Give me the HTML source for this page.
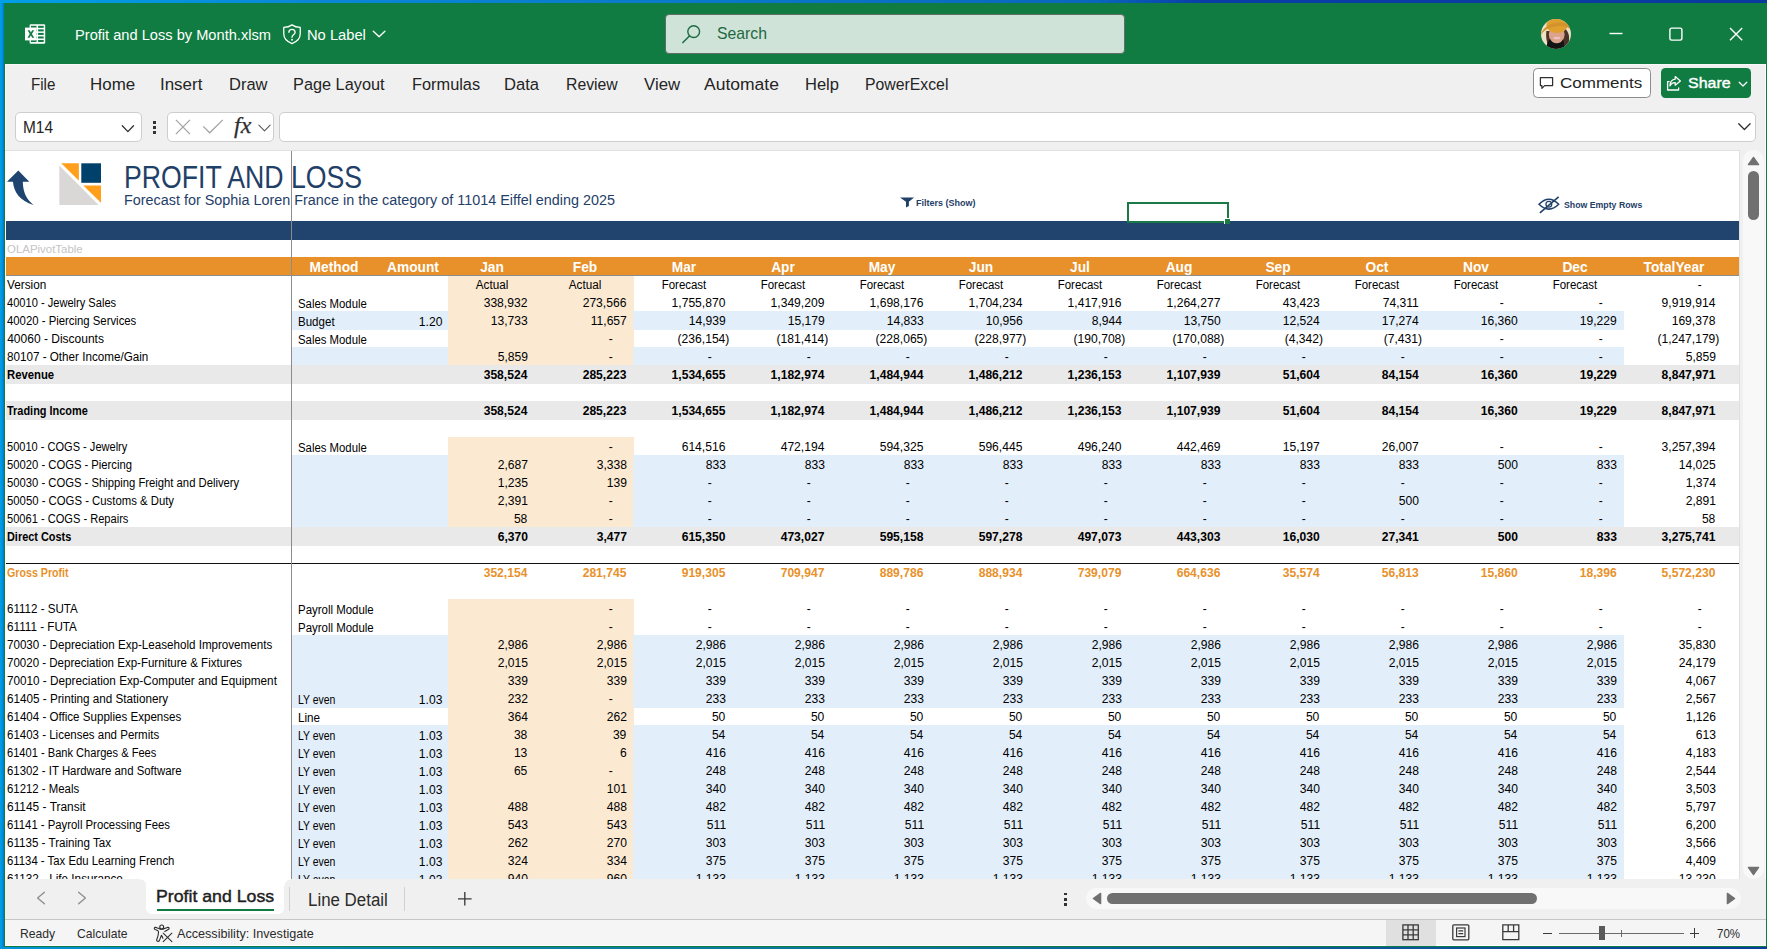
<!DOCTYPE html>
<html lang="en"><head><meta charset="utf-8"><title>Profit and Loss by Month.xlsm - Excel</title>
<style>
html,body{margin:0;padding:0}
body{width:1767px;height:949px;position:relative;overflow:hidden;background:#0a3ea6;font-family:"Liberation Sans",Arial,sans-serif}
.a{position:absolute}
.t{position:absolute;white-space:nowrap;line-height:20px;transform-origin:0 50%}
svg{display:block;overflow:visible}
</style></head><body>
<div class="a" style="left:0;top:0;width:1767px;height:949px;background:linear-gradient(90deg,#009fe6 0%,#0a88d6 17%,#0a78c8 40%,#0a66bc 62%,#0a3ea6 68%,#0a3a9e 100%)"></div>
<div class="a" style="left:0;top:3px;width:4px;height:946px;background:linear-gradient(90deg,#00a0e8 0%,#0096e0 45%,#0079c2 100%)"></div>
<div class="a" style="left:0;top:946.5px;width:1767px;height:2.5px;background:linear-gradient(90deg,#0094dc 0%,#0a86b4 15%,#0b7c9c 40%,#0b5f9a 70%,#0a3d9a 100%)"></div>
<div class="a" style="left:3.8px;top:3px;width:1763.2px;height:943.9px;background:#107C41;"></div>
<div class="a" style="left:5.1px;top:63.7px;width:1760.6px;height:882.1px;background:#F0F0F0;"></div>
<div class="a" style="left:5.1px;top:63.7px;width:1760.6px;height:0.8px;background:#f8f8f8;"></div>
<div class="a" style="left:5.1px;top:63.7px;width:1.1px;height:882.1px;background:#fbfbfb;"></div>
<div class="a" style="left:1764.8px;top:63.7px;width:0.9px;height:882.1px;background:#fbfbfb;"></div>
<svg class="a" style="left:24.9px;top:24px;" width="20.3" height="20" viewBox="0 0 20.3 20"><rect x="4.6" y="0.2" width="15.6" height="19.6" rx="1.2" fill="#fff"/><rect x="5.9" y="1.80" width="5.6" height="2.05" fill="#107C41"/><rect x="13.1" y="1.80" width="5.6" height="2.05" fill="#107C41"/><rect x="5.9" y="5.35" width="5.6" height="2.05" fill="#107C41"/><rect x="13.1" y="5.35" width="5.6" height="2.05" fill="#107C41"/><rect x="5.9" y="8.90" width="5.6" height="2.05" fill="#107C41"/><rect x="13.1" y="8.90" width="5.6" height="2.05" fill="#107C41"/><rect x="5.9" y="12.45" width="5.6" height="2.05" fill="#107C41"/><rect x="13.1" y="12.45" width="5.6" height="2.05" fill="#107C41"/><rect x="5.9" y="16.00" width="5.6" height="2.05" fill="#107C41"/><rect x="13.1" y="16.00" width="5.6" height="2.05" fill="#107C41"/><rect x="0" y="3.6" width="11.4" height="12.8" fill="#fff"/><path d="M2.6 6.2 L4.7 6.2 L5.9 8.6 L7.1 6.2 L9.1 6.2 L6.95 10 L9.2 13.8 L7.1 13.8 L5.85 11.3 L4.6 13.8 L2.5 13.8 L4.75 10 Z" fill="#107C41"/></svg>
<div class="t" style="top:25.00px;font-size:15.3px;color:#fff;left:75.20px;transform:scaleX(0.9564);">Profit and Loss by Month.xlsm</div>
<svg class="a" style="left:283px;top:23.9px;" width="18" height="20.4" viewBox="0 0 18 20.4"><path d="M9 0.9 C6.6 2.6 3.9 3.3 0.75 3.4 L0.75 9.6 C0.75 14.3 3.9 17.8 9 19.6 C14.1 17.8 17.25 14.3 17.25 9.6 L17.25 3.4 C14.1 3.3 11.4 2.6 9 0.9 Z" fill="none" stroke="#fff" stroke-width="1.3" stroke-linejoin="round"/><path d="M5.9 8.3 C5.9 4.5 12.1 4.5 12.1 8.2 C12.1 10.7 9 10.9 9 13.3" fill="none" stroke="#fff" stroke-width="1.35" stroke-linecap="round"/><circle cx="9" cy="15.8" r="0.95" fill="#fff"/></svg>
<div class="t" style="top:25.00px;font-size:15.3px;color:#fff;left:307.40px;transform:scaleX(0.9617);">No Label</div>
<svg class="a" style="left:372px;top:30px;" width="14" height="9" viewBox="0 0 14 9"><path d="M1.3 1.3 L7.1 6.7 L12.9 1.3" fill="none" stroke="#fff" stroke-width="1.4" stroke-linecap="round" stroke-linejoin="round"/></svg>
<div class="a" style="left:665px;top:14px;width:460px;height:40px;background:#CFE3D8;border-radius:4px;box-sizing:border-box;border:1px solid #5f6e66;"></div>
<svg class="a" style="left:681px;top:23px;" width="22" height="22" viewBox="0 0 22 22"><circle cx="12.7" cy="8.6" r="5.9" fill="none" stroke="#1d6b43" stroke-width="1.4"/><path d="M8.4 12.9 L1.9 19.6" stroke="#1d6b43" stroke-width="1.5" stroke-linecap="round"/></svg>
<div class="t" style="top:23.00px;font-size:16.4px;color:#1d6840;left:717.00px;transform:scaleX(0.9622);">Search</div>
<svg class="a" style="left:1541px;top:19px;" width="30" height="30" viewBox="0 0 30 30"><defs><clipPath id="avc"><circle cx="15" cy="15" r="15"/></clipPath></defs><g clip-path="url(#avc)"><rect x="-1" y="-1" width="32" height="32" fill="#EEE1C6"/><path d="M5.4 12 C4.6 17 5.6 22 7 27 L11 27 L10 12 Z" fill="#4a3228"/><path d="M21.5 9 C27 10 28.6 16 28 22 C27.4 25.5 25 28 22 29 L20 20 Z" fill="#4a3228"/><ellipse cx="15.7" cy="15.6" rx="7.9" ry="8.9" fill="#DCA38C"/><ellipse cx="15.9" cy="19" rx="3.5" ry="1.3" fill="#EBC0BD"/><ellipse cx="10.7" cy="11.2" rx="1.5" ry="0.8" fill="#4b3a33"/><ellipse cx="19.5" cy="10.6" rx="1.5" ry="0.8" fill="#4b3a33"/><path d="M4.5 31 L5.8 26 C6.8 22.5 8 20.6 9.2 20.2 C10.5 23 13 24.3 15.7 24.3 C18.5 24.3 21 23 22 20.6 C23 22 23.2 27 23.5 31 Z" fill="#141414"/><ellipse cx="16" cy="6.6" rx="10.6" ry="7.4" fill="#E0A030"/><path d="M-1 16.8 C2 12.2 6 9.8 9 9 C13 6.8 20 6.6 24 7.5 C26.5 8.2 28.4 9.4 30.5 11.6 L29.5 6.5 C24 2.2 12 2.8 6 7.2 C3 9.4 0.5 12.5 -1 16.8 Z" fill="#D3922A"/></g></svg>
<svg class="a" style="left:1608px;top:26px;" width="16" height="16" viewBox="0 0 16 16"><path d="M1.5 7.5 H14.5" stroke="#fff" stroke-width="1.4"/></svg>
<svg class="a" style="left:1668px;top:26px;" width="16" height="16" viewBox="0 0 16 16"><rect x="1.9" y="2.1" width="12" height="12" rx="1.8" fill="none" stroke="#fff" stroke-width="1.4"/></svg>
<svg class="a" style="left:1728px;top:26px;" width="16" height="16" viewBox="0 0 16 16"><path d="M2 2 L14.2 14.2 M14.2 2 L2 14.2" stroke="#fff" stroke-width="1.4"/></svg>
<div class="t" style="top:75.00px;font-size:16.8px;color:#242424;left:31.10px;transform:scaleX(0.9013);">File</div>
<div class="t" style="top:75.00px;font-size:16.8px;color:#242424;left:90.30px;transform:scaleX(1.0086);">Home</div>
<div class="t" style="top:75.00px;font-size:16.8px;color:#242424;left:160.20px;transform:scaleX(1.0091);">Insert</div>
<div class="t" style="top:75.00px;font-size:16.8px;color:#242424;left:228.60px;transform:scaleX(0.9820);">Draw</div>
<div class="t" style="top:75.00px;font-size:16.8px;color:#242424;left:292.60px;transform:scaleX(0.9719);">Page Layout</div>
<div class="t" style="top:75.00px;font-size:16.8px;color:#242424;left:411.70px;transform:scaleX(0.9741);">Formulas</div>
<div class="t" style="top:75.00px;font-size:16.8px;color:#242424;left:504.30px;transform:scaleX(0.9891);">Data</div>
<div class="t" style="top:75.00px;font-size:16.8px;color:#242424;left:566.30px;transform:scaleX(0.9404);">Review</div>
<div class="t" style="top:75.00px;font-size:16.8px;color:#242424;left:644.10px;">View</div>
<div class="t" style="top:75.00px;font-size:16.8px;color:#242424;left:704.40px;transform:scaleX(1.0430);">Automate</div>
<div class="t" style="top:75.00px;font-size:16.8px;color:#242424;left:805.40px;transform:scaleX(0.9840);">Help</div>
<div class="t" style="top:75.00px;font-size:16.8px;color:#242424;left:865.40px;transform:scaleX(0.9413);">PowerExcel</div>
<div class="a" style="left:1533.2px;top:68.3px;width:117.4px;height:29.3px;background:#fff;border-radius:4.5px;box-sizing:border-box;border:1px solid #8d8d8d;"></div>
<svg class="a" style="left:1539px;top:75.5px;" width="16" height="15" viewBox="0 0 16 15"><path d="M1.4 1.5 H13.6 V9.6 H5.6 L2.9 12.4 V9.6 H1.4 Z" fill="none" stroke="#303030" stroke-width="1.25" stroke-linejoin="round"/></svg>
<div class="t" style="top:73.00px;font-size:15.4px;color:#242424;left:1559.70px;transform:scaleX(1.1054);">Comments</div>
<div class="a" style="left:1661px;top:68.3px;width:89.8px;height:29.3px;background:#107C41;border-radius:4.5px;"></div>
<svg class="a" style="left:1666px;top:74.5px;" width="16" height="17" viewBox="0 0 16 17"><path d="M3.6 6.6 H1.6 V15 H12.6 V12.4" fill="none" stroke="#fff" stroke-width="1.3" stroke-linejoin="round"/><path d="M9.2 1.6 L14.4 5.9 L9.2 10.2 V7.6 C6.6 7.5 5 8.6 3.9 10.9 C4.1 7 6 4.6 9.2 4.2 Z" fill="none" stroke="#fff" stroke-width="1.25" stroke-linejoin="round"/></svg>
<div class="t" style="top:73.00px;font-size:15.4px;color:#fff;left:1687.60px;transform:scaleX(1.0366);-webkit-text-stroke:0.4px #fff;">Share</div>
<svg class="a" style="left:1737.5px;top:80.5px;" width="10" height="7" viewBox="0 0 10 7"><path d="M1.2 1.3 L5 5 L8.8 1.3" fill="none" stroke="#fff" stroke-width="1.3" stroke-linecap="round" stroke-linejoin="round"/></svg>
<div class="a" style="left:15.2px;top:112.2px;width:126.4px;height:29.7px;background:#fff;border-radius:5px;box-sizing:border-box;border:1px solid #cdcdcd;"></div>
<div class="t" style="top:118.00px;font-size:15.6px;color:#242424;left:22.60px;transform:scaleX(0.9885);">M14</div>
<svg class="a" style="left:121px;top:124px;" width="14" height="10" viewBox="0 0 14 10"><path d="M1.3 1.8 L6.9 7.6 L12.5 1.8" fill="none" stroke="#303030" stroke-width="1.3" stroke-linecap="round" stroke-linejoin="round"/></svg>
<div class="a" style="left:152.9px;top:121.1px;width:3.2px;height:2.9px;background:#333;"></div>
<div class="a" style="left:152.9px;top:126.1px;width:3.2px;height:2.9px;background:#333;"></div>
<div class="a" style="left:152.9px;top:131.1px;width:3.2px;height:2.9px;background:#333;"></div>
<div class="a" style="left:167px;top:112.2px;width:106.5px;height:29.7px;background:#fff;border-radius:5px;box-sizing:border-box;border:1px solid #cdcdcd;"></div>
<svg class="a" style="left:175px;top:119px;" width="16" height="16" viewBox="0 0 16 16"><path d="M0.9 0.9 L15 15.1 M15 0.9 L0.9 15.1" stroke="#a3a3a3" stroke-width="1.3"/></svg>
<svg class="a" style="left:202px;top:119px;" width="22" height="16" viewBox="0 0 22 16"><path d="M1.3 7.4 L7.7 13.8 L20.8 0.9" fill="none" stroke="#a3a3a3" stroke-width="1.3"/></svg>
<div class="t" style="left:233.6px;top:112.6px;line-height:26px;font-family:'Liberation Serif',serif;font-style:italic;font-size:23px;color:#2e2e2e;letter-spacing:0.2px;-webkit-text-stroke:0.25px #2e2e2e;transform:scaleX(1.04)">fx</div>
<svg class="a" style="left:258.3px;top:124.3px;" width="13" height="8" viewBox="0 0 13 8"><path d="M0.9 1.1 L6.5 6.8 L12.1 1.1" fill="none" stroke="#5a5a5a" stroke-width="1.1" stroke-linecap="round" stroke-linejoin="round"/></svg>
<div class="a" style="left:279.2px;top:112.2px;width:1476.4px;height:29.7px;background:#fff;border-radius:5px;box-sizing:border-box;border:1px solid #cdcdcd;"></div>
<svg class="a" style="left:1737px;top:121.5px;" width="15" height="10" viewBox="0 0 15 10"><path d="M1.7 1.8 L7.4 7.5 L13.1 1.8" fill="none" stroke="#303030" stroke-width="1.3" stroke-linecap="round" stroke-linejoin="round"/></svg>
<div class="a" style="left:5.1px;top:150px;width:1735.1px;height:729.3px;background:#e0e0e0;"></div>
<div class="a" style="left:5.1px;top:150.9px;width:1734.2px;height:728.4px;background:#fff;"></div>
<div class="a" id="sheet" style="left:0;top:0;width:1767px;height:879.3px;overflow:hidden">
<div class="a" style="left:6px;top:221px;width:1733.3px;height:18.9px;background:#20446E;"></div>
<div class="a" style="left:6px;top:257.2px;width:1733.3px;height:17.8px;background:#E8912A;"></div>
<div class="a" style="left:448px;top:275px;width:185.8px;height:18px;background:#FBE9D2;"></div>
<div class="a" style="left:448px;top:293px;width:185.8px;height:18px;background:#FBE9D2;"></div>
<div class="a" style="left:448px;top:311px;width:185.8px;height:18px;background:#FBE9D2;"></div>
<div class="a" style="left:292px;top:311px;width:156px;height:18.8px;background:#E2EEF9;"></div>
<div class="a" style="left:632.9px;top:311px;width:991.1px;height:18.8px;background:#E2EEF9;"></div>
<div class="a" style="left:448px;top:329px;width:185.8px;height:18px;background:#FBE9D2;"></div>
<div class="a" style="left:448px;top:347px;width:185.8px;height:18px;background:#FBE9D2;"></div>
<div class="a" style="left:292px;top:347px;width:156px;height:18.8px;background:#E2EEF9;"></div>
<div class="a" style="left:632.9px;top:347px;width:991.1px;height:18.8px;background:#E2EEF9;"></div>
<div class="a" style="left:6px;top:365px;width:1733.3px;height:18.8px;background:#E9E9E9;"></div>
<div class="a" style="left:6px;top:401px;width:1733.3px;height:18.8px;background:#E9E9E9;"></div>
<div class="a" style="left:448px;top:437px;width:185.8px;height:18px;background:#FBE9D2;"></div>
<div class="a" style="left:448px;top:455px;width:185.8px;height:18px;background:#FBE9D2;"></div>
<div class="a" style="left:292px;top:455px;width:156px;height:18.8px;background:#E2EEF9;"></div>
<div class="a" style="left:632.9px;top:455px;width:991.1px;height:18.8px;background:#E2EEF9;"></div>
<div class="a" style="left:448px;top:473px;width:185.8px;height:18px;background:#FBE9D2;"></div>
<div class="a" style="left:292px;top:473px;width:156px;height:18.8px;background:#E2EEF9;"></div>
<div class="a" style="left:632.9px;top:473px;width:991.1px;height:18.8px;background:#E2EEF9;"></div>
<div class="a" style="left:448px;top:491px;width:185.8px;height:18px;background:#FBE9D2;"></div>
<div class="a" style="left:292px;top:491px;width:156px;height:18.8px;background:#E2EEF9;"></div>
<div class="a" style="left:632.9px;top:491px;width:991.1px;height:18.8px;background:#E2EEF9;"></div>
<div class="a" style="left:448px;top:509px;width:185.8px;height:18px;background:#FBE9D2;"></div>
<div class="a" style="left:292px;top:509px;width:156px;height:18.8px;background:#E2EEF9;"></div>
<div class="a" style="left:632.9px;top:509px;width:991.1px;height:18.8px;background:#E2EEF9;"></div>
<div class="a" style="left:6px;top:527px;width:1733.3px;height:18.8px;background:#E9E9E9;"></div>
<div class="a" style="left:448px;top:599px;width:185.8px;height:18px;background:#FBE9D2;"></div>
<div class="a" style="left:448px;top:617px;width:185.8px;height:18px;background:#FBE9D2;"></div>
<div class="a" style="left:448px;top:635px;width:185.8px;height:18px;background:#FBE9D2;"></div>
<div class="a" style="left:292px;top:635px;width:156px;height:18.8px;background:#E2EEF9;"></div>
<div class="a" style="left:632.9px;top:635px;width:991.1px;height:18.8px;background:#E2EEF9;"></div>
<div class="a" style="left:448px;top:653px;width:185.8px;height:18px;background:#FBE9D2;"></div>
<div class="a" style="left:292px;top:653px;width:156px;height:18.8px;background:#E2EEF9;"></div>
<div class="a" style="left:632.9px;top:653px;width:991.1px;height:18.8px;background:#E2EEF9;"></div>
<div class="a" style="left:448px;top:671px;width:185.8px;height:18px;background:#FBE9D2;"></div>
<div class="a" style="left:292px;top:671px;width:156px;height:18.8px;background:#E2EEF9;"></div>
<div class="a" style="left:632.9px;top:671px;width:991.1px;height:18.8px;background:#E2EEF9;"></div>
<div class="a" style="left:448px;top:689px;width:185.8px;height:18px;background:#FBE9D2;"></div>
<div class="a" style="left:292px;top:689px;width:156px;height:18.8px;background:#E2EEF9;"></div>
<div class="a" style="left:632.9px;top:689px;width:991.1px;height:18.8px;background:#E2EEF9;"></div>
<div class="a" style="left:448px;top:707px;width:185.8px;height:18px;background:#FBE9D2;"></div>
<div class="a" style="left:448px;top:725px;width:185.8px;height:18px;background:#FBE9D2;"></div>
<div class="a" style="left:292px;top:725px;width:156px;height:18.8px;background:#E2EEF9;"></div>
<div class="a" style="left:632.9px;top:725px;width:991.1px;height:18.8px;background:#E2EEF9;"></div>
<div class="a" style="left:448px;top:743px;width:185.8px;height:18px;background:#FBE9D2;"></div>
<div class="a" style="left:292px;top:743px;width:156px;height:18.8px;background:#E2EEF9;"></div>
<div class="a" style="left:632.9px;top:743px;width:991.1px;height:18.8px;background:#E2EEF9;"></div>
<div class="a" style="left:448px;top:761px;width:185.8px;height:18px;background:#FBE9D2;"></div>
<div class="a" style="left:292px;top:761px;width:156px;height:18.8px;background:#E2EEF9;"></div>
<div class="a" style="left:632.9px;top:761px;width:991.1px;height:18.8px;background:#E2EEF9;"></div>
<div class="a" style="left:448px;top:779px;width:185.8px;height:18px;background:#FBE9D2;"></div>
<div class="a" style="left:292px;top:779px;width:156px;height:18.8px;background:#E2EEF9;"></div>
<div class="a" style="left:632.9px;top:779px;width:991.1px;height:18.8px;background:#E2EEF9;"></div>
<div class="a" style="left:448px;top:797px;width:185.8px;height:18px;background:#FBE9D2;"></div>
<div class="a" style="left:292px;top:797px;width:156px;height:18.8px;background:#E2EEF9;"></div>
<div class="a" style="left:632.9px;top:797px;width:991.1px;height:18.8px;background:#E2EEF9;"></div>
<div class="a" style="left:448px;top:815px;width:185.8px;height:18px;background:#FBE9D2;"></div>
<div class="a" style="left:292px;top:815px;width:156px;height:18.8px;background:#E2EEF9;"></div>
<div class="a" style="left:632.9px;top:815px;width:991.1px;height:18.8px;background:#E2EEF9;"></div>
<div class="a" style="left:448px;top:833px;width:185.8px;height:18px;background:#FBE9D2;"></div>
<div class="a" style="left:292px;top:833px;width:156px;height:18.8px;background:#E2EEF9;"></div>
<div class="a" style="left:632.9px;top:833px;width:991.1px;height:18.8px;background:#E2EEF9;"></div>
<div class="a" style="left:448px;top:851px;width:185.8px;height:18px;background:#FBE9D2;"></div>
<div class="a" style="left:292px;top:851px;width:156px;height:18.8px;background:#E2EEF9;"></div>
<div class="a" style="left:632.9px;top:851px;width:991.1px;height:18.8px;background:#E2EEF9;"></div>
<div class="a" style="left:448px;top:869px;width:185.8px;height:18px;background:#FBE9D2;"></div>
<div class="a" style="left:292px;top:869px;width:156px;height:18.8px;background:#E2EEF9;"></div>
<div class="a" style="left:632.9px;top:869px;width:991.1px;height:18.8px;background:#E2EEF9;"></div>
<div class="a" style="left:6px;top:563px;width:1733.3px;height:1.1px;background:#111;"></div>
<div class="a" style="left:6px;top:274.8px;width:1733.3px;height:1.2px;background:#8c8c8c;"></div>
<div class="a" style="left:290.8px;top:151px;width:1.1px;height:728.3px;background:#8c8c8c;"></div>
<div class="t" style="top:258.00px;font-size:13.8px;font-weight:700;color:#fff;left:334.40px;transform-origin:50% 50%;transform:translateX(-50%) scaleX(0.9950);">Method</div>
<div class="t" style="top:258.00px;font-size:13.8px;font-weight:700;color:#fff;left:412.90px;transform-origin:50% 50%;transform:translateX(-50%) scaleX(0.9950);">Amount</div>
<div class="t" style="top:258.00px;font-size:13.8px;font-weight:700;color:#fff;left:491.90px;transform-origin:50% 50%;transform:translateX(-50%) scaleX(0.9950);">Jan</div>
<div class="t" style="top:258.00px;font-size:13.8px;font-weight:700;color:#fff;left:584.80px;transform-origin:50% 50%;transform:translateX(-50%) scaleX(0.9950);">Feb</div>
<div class="t" style="top:258.00px;font-size:13.8px;font-weight:700;color:#fff;left:683.90px;transform-origin:50% 50%;transform:translateX(-50%) scaleX(0.9950);">Mar</div>
<div class="t" style="top:258.00px;font-size:13.8px;font-weight:700;color:#fff;left:782.90px;transform-origin:50% 50%;transform:translateX(-50%) scaleX(0.9950);">Apr</div>
<div class="t" style="top:258.00px;font-size:13.8px;font-weight:700;color:#fff;left:881.90px;transform-origin:50% 50%;transform:translateX(-50%) scaleX(0.9950);">May</div>
<div class="t" style="top:258.00px;font-size:13.8px;font-weight:700;color:#fff;left:980.90px;transform-origin:50% 50%;transform:translateX(-50%) scaleX(0.9950);">Jun</div>
<div class="t" style="top:258.00px;font-size:13.8px;font-weight:700;color:#fff;left:1079.90px;transform-origin:50% 50%;transform:translateX(-50%) scaleX(0.9950);">Jul</div>
<div class="t" style="top:258.00px;font-size:13.8px;font-weight:700;color:#fff;left:1178.90px;transform-origin:50% 50%;transform:translateX(-50%) scaleX(0.9950);">Aug</div>
<div class="t" style="top:258.00px;font-size:13.8px;font-weight:700;color:#fff;left:1277.90px;transform-origin:50% 50%;transform:translateX(-50%) scaleX(0.9950);">Sep</div>
<div class="t" style="top:258.00px;font-size:13.8px;font-weight:700;color:#fff;left:1376.90px;transform-origin:50% 50%;transform:translateX(-50%) scaleX(0.9950);">Oct</div>
<div class="t" style="top:258.00px;font-size:13.8px;font-weight:700;color:#fff;left:1475.90px;transform-origin:50% 50%;transform:translateX(-50%) scaleX(0.9950);">Nov</div>
<div class="t" style="top:258.00px;font-size:13.8px;font-weight:700;color:#fff;left:1574.90px;transform-origin:50% 50%;transform:translateX(-50%) scaleX(0.9950);">Dec</div>
<div class="t" style="top:258.00px;font-size:13.8px;font-weight:700;color:#fff;left:1673.90px;transform-origin:50% 50%;transform:translateX(-50%) scaleX(0.9950);">TotalYear</div>
<div class="t" style="top:275.00px;font-size:12px;left:7.20px;transform:scaleX(0.9793);">Version</div>
<div class="t" style="top:275.00px;font-size:12px;left:491.50px;transform-origin:50% 50%;transform:translateX(-50%) scaleX(0.9770);">Actual</div>
<div class="t" style="top:275.00px;font-size:12px;left:584.50px;transform-origin:50% 50%;transform:translateX(-50%) scaleX(0.9770);">Actual</div>
<div class="t" style="top:275.00px;font-size:12px;left:683.50px;transform-origin:50% 50%;transform:translateX(-50%) scaleX(0.9550);">Forecast</div>
<div class="t" style="top:275.00px;font-size:12px;left:782.50px;transform-origin:50% 50%;transform:translateX(-50%) scaleX(0.9550);">Forecast</div>
<div class="t" style="top:275.00px;font-size:12px;left:881.50px;transform-origin:50% 50%;transform:translateX(-50%) scaleX(0.9550);">Forecast</div>
<div class="t" style="top:275.00px;font-size:12px;left:980.50px;transform-origin:50% 50%;transform:translateX(-50%) scaleX(0.9550);">Forecast</div>
<div class="t" style="top:275.00px;font-size:12px;left:1079.50px;transform-origin:50% 50%;transform:translateX(-50%) scaleX(0.9550);">Forecast</div>
<div class="t" style="top:275.00px;font-size:12px;left:1178.50px;transform-origin:50% 50%;transform:translateX(-50%) scaleX(0.9550);">Forecast</div>
<div class="t" style="top:275.00px;font-size:12px;left:1277.50px;transform-origin:50% 50%;transform:translateX(-50%) scaleX(0.9550);">Forecast</div>
<div class="t" style="top:275.00px;font-size:12px;left:1376.50px;transform-origin:50% 50%;transform:translateX(-50%) scaleX(0.9550);">Forecast</div>
<div class="t" style="top:275.00px;font-size:12px;left:1475.50px;transform-origin:50% 50%;transform:translateX(-50%) scaleX(0.9550);">Forecast</div>
<div class="t" style="top:275.00px;font-size:12px;left:1574.50px;transform-origin:50% 50%;transform:translateX(-50%) scaleX(0.9550);">Forecast</div>
<div class="t" style="top:275.00px;font-size:12px;left:1699.80px;transform-origin:50% 50%;transform:translateX(-50%) scaleX(1.0000);">-</div>
<div class="t" style="top:293.00px;font-size:12px;left:7.20px;transform:scaleX(0.9241);">40010 - Jewelry Sales</div>
<div class="t" style="top:294.00px;font-size:12px;left:298.10px;transform:scaleX(0.9462);">Sales Module</div>
<div class="t" style="top:293.00px;font-size:12px;right:1239.30px;transform-origin:100% 50%;transform:scaleX(1.0080);">338,932</div>
<div class="t" style="top:293.00px;font-size:12px;right:1140.30px;transform-origin:100% 50%;transform:scaleX(1.0080);">273,566</div>
<div class="t" style="top:293.00px;font-size:12px;right:1041.30px;transform-origin:100% 50%;transform:scaleX(1.0080);">1,755,870</div>
<div class="t" style="top:293.00px;font-size:12px;right:942.30px;transform-origin:100% 50%;transform:scaleX(1.0080);">1,349,209</div>
<div class="t" style="top:293.00px;font-size:12px;right:843.30px;transform-origin:100% 50%;transform:scaleX(1.0080);">1,698,176</div>
<div class="t" style="top:293.00px;font-size:12px;right:744.30px;transform-origin:100% 50%;transform:scaleX(1.0080);">1,704,234</div>
<div class="t" style="top:293.00px;font-size:12px;right:645.30px;transform-origin:100% 50%;transform:scaleX(1.0080);">1,417,916</div>
<div class="t" style="top:293.00px;font-size:12px;right:546.30px;transform-origin:100% 50%;transform:scaleX(1.0080);">1,264,277</div>
<div class="t" style="top:293.00px;font-size:12px;right:447.30px;transform-origin:100% 50%;transform:scaleX(1.0080);">43,423</div>
<div class="t" style="top:293.00px;font-size:12px;right:348.30px;transform-origin:100% 50%;transform:scaleX(1.0080);">74,311</div>
<div class="t" style="top:293.00px;font-size:12px;left:1501.80px;transform-origin:50% 50%;transform:translateX(-50%) scaleX(1.0000);">-</div>
<div class="t" style="top:293.00px;font-size:12px;left:1600.80px;transform-origin:50% 50%;transform:translateX(-50%) scaleX(1.0000);">-</div>
<div class="t" style="top:293.00px;font-size:12px;right:51.30px;transform-origin:100% 50%;transform:scaleX(1.0080);">9,919,914</div>
<div class="t" style="top:311.00px;font-size:12px;left:7.20px;transform:scaleX(0.9456);">40020 - Piercing Services</div>
<div class="t" style="top:312.00px;font-size:12px;left:298.10px;transform:scaleX(0.9623);">Budget</div>
<div class="t" style="top:312.00px;font-size:12px;right:1325.10px;transform-origin:100% 50%;transform:scaleX(1.0080);">1.20</div>
<div class="t" style="top:311.00px;font-size:12px;right:1239.30px;transform-origin:100% 50%;transform:scaleX(1.0080);">13,733</div>
<div class="t" style="top:311.00px;font-size:12px;right:1140.30px;transform-origin:100% 50%;transform:scaleX(1.0080);">11,657</div>
<div class="t" style="top:311.00px;font-size:12px;right:1041.30px;transform-origin:100% 50%;transform:scaleX(1.0080);">14,939</div>
<div class="t" style="top:311.00px;font-size:12px;right:942.30px;transform-origin:100% 50%;transform:scaleX(1.0080);">15,179</div>
<div class="t" style="top:311.00px;font-size:12px;right:843.30px;transform-origin:100% 50%;transform:scaleX(1.0080);">14,833</div>
<div class="t" style="top:311.00px;font-size:12px;right:744.30px;transform-origin:100% 50%;transform:scaleX(1.0080);">10,956</div>
<div class="t" style="top:311.00px;font-size:12px;right:645.30px;transform-origin:100% 50%;transform:scaleX(1.0080);">8,944</div>
<div class="t" style="top:311.00px;font-size:12px;right:546.30px;transform-origin:100% 50%;transform:scaleX(1.0080);">13,750</div>
<div class="t" style="top:311.00px;font-size:12px;right:447.30px;transform-origin:100% 50%;transform:scaleX(1.0080);">12,524</div>
<div class="t" style="top:311.00px;font-size:12px;right:348.30px;transform-origin:100% 50%;transform:scaleX(1.0080);">17,274</div>
<div class="t" style="top:311.00px;font-size:12px;right:249.30px;transform-origin:100% 50%;transform:scaleX(1.0080);">16,360</div>
<div class="t" style="top:311.00px;font-size:12px;right:150.30px;transform-origin:100% 50%;transform:scaleX(1.0080);">19,229</div>
<div class="t" style="top:311.00px;font-size:12px;right:51.30px;transform-origin:100% 50%;transform:scaleX(1.0080);">169,378</div>
<div class="t" style="top:329.00px;font-size:12px;left:7.20px;">40060 - Discounts</div>
<div class="t" style="top:330.00px;font-size:12px;left:298.10px;transform:scaleX(0.9462);">Sales Module</div>
<div class="t" style="top:329.00px;font-size:12px;left:610.80px;transform-origin:50% 50%;transform:translateX(-50%) scaleX(1.0000);">-</div>
<div class="t" style="top:329.00px;font-size:12px;right:1037.90px;transform-origin:100% 50%;transform:scaleX(1.0080);">(236,154)</div>
<div class="t" style="top:329.00px;font-size:12px;right:938.90px;transform-origin:100% 50%;transform:scaleX(1.0080);">(181,414)</div>
<div class="t" style="top:329.00px;font-size:12px;right:839.90px;transform-origin:100% 50%;transform:scaleX(1.0080);">(228,065)</div>
<div class="t" style="top:329.00px;font-size:12px;right:740.90px;transform-origin:100% 50%;transform:scaleX(1.0080);">(228,977)</div>
<div class="t" style="top:329.00px;font-size:12px;right:641.90px;transform-origin:100% 50%;transform:scaleX(1.0080);">(190,708)</div>
<div class="t" style="top:329.00px;font-size:12px;right:542.90px;transform-origin:100% 50%;transform:scaleX(1.0080);">(170,088)</div>
<div class="t" style="top:329.00px;font-size:12px;right:443.90px;transform-origin:100% 50%;transform:scaleX(1.0080);">(4,342)</div>
<div class="t" style="top:329.00px;font-size:12px;right:344.90px;transform-origin:100% 50%;transform:scaleX(1.0080);">(7,431)</div>
<div class="t" style="top:329.00px;font-size:12px;left:1501.80px;transform-origin:50% 50%;transform:translateX(-50%) scaleX(1.0000);">-</div>
<div class="t" style="top:329.00px;font-size:12px;left:1600.80px;transform-origin:50% 50%;transform:translateX(-50%) scaleX(1.0000);">-</div>
<div class="t" style="top:329.00px;font-size:12px;right:47.90px;transform-origin:100% 50%;transform:scaleX(1.0080);">(1,247,179)</div>
<div class="t" style="top:347.00px;font-size:12px;left:7.20px;transform:scaleX(0.9717);">80107 - Other Income/Gain</div>
<div class="t" style="top:347.00px;font-size:12px;right:1239.30px;transform-origin:100% 50%;transform:scaleX(1.0080);">5,859</div>
<div class="t" style="top:347.00px;font-size:12px;left:610.80px;transform-origin:50% 50%;transform:translateX(-50%) scaleX(1.0000);">-</div>
<div class="t" style="top:347.00px;font-size:12px;left:709.80px;transform-origin:50% 50%;transform:translateX(-50%) scaleX(1.0000);">-</div>
<div class="t" style="top:347.00px;font-size:12px;left:808.80px;transform-origin:50% 50%;transform:translateX(-50%) scaleX(1.0000);">-</div>
<div class="t" style="top:347.00px;font-size:12px;left:907.80px;transform-origin:50% 50%;transform:translateX(-50%) scaleX(1.0000);">-</div>
<div class="t" style="top:347.00px;font-size:12px;left:1006.80px;transform-origin:50% 50%;transform:translateX(-50%) scaleX(1.0000);">-</div>
<div class="t" style="top:347.00px;font-size:12px;left:1105.80px;transform-origin:50% 50%;transform:translateX(-50%) scaleX(1.0000);">-</div>
<div class="t" style="top:347.00px;font-size:12px;left:1204.80px;transform-origin:50% 50%;transform:translateX(-50%) scaleX(1.0000);">-</div>
<div class="t" style="top:347.00px;font-size:12px;left:1303.80px;transform-origin:50% 50%;transform:translateX(-50%) scaleX(1.0000);">-</div>
<div class="t" style="top:347.00px;font-size:12px;left:1402.80px;transform-origin:50% 50%;transform:translateX(-50%) scaleX(1.0000);">-</div>
<div class="t" style="top:347.00px;font-size:12px;left:1501.80px;transform-origin:50% 50%;transform:translateX(-50%) scaleX(1.0000);">-</div>
<div class="t" style="top:347.00px;font-size:12px;left:1600.80px;transform-origin:50% 50%;transform:translateX(-50%) scaleX(1.0000);">-</div>
<div class="t" style="top:347.00px;font-size:12px;right:51.30px;transform-origin:100% 50%;transform:scaleX(1.0080);">5,859</div>
<div class="t" style="top:365.00px;font-size:12px;font-weight:700;left:7.20px;transform:scaleX(0.9416);">Revenue</div>
<div class="t" style="top:365.00px;font-size:12px;font-weight:700;right:1239.30px;transform-origin:100% 50%;transform:scaleX(1.0080);">358,524</div>
<div class="t" style="top:365.00px;font-size:12px;font-weight:700;right:1140.30px;transform-origin:100% 50%;transform:scaleX(1.0080);">285,223</div>
<div class="t" style="top:365.00px;font-size:12px;font-weight:700;right:1041.30px;transform-origin:100% 50%;transform:scaleX(1.0080);">1,534,655</div>
<div class="t" style="top:365.00px;font-size:12px;font-weight:700;right:942.30px;transform-origin:100% 50%;transform:scaleX(1.0080);">1,182,974</div>
<div class="t" style="top:365.00px;font-size:12px;font-weight:700;right:843.30px;transform-origin:100% 50%;transform:scaleX(1.0080);">1,484,944</div>
<div class="t" style="top:365.00px;font-size:12px;font-weight:700;right:744.30px;transform-origin:100% 50%;transform:scaleX(1.0080);">1,486,212</div>
<div class="t" style="top:365.00px;font-size:12px;font-weight:700;right:645.30px;transform-origin:100% 50%;transform:scaleX(1.0080);">1,236,153</div>
<div class="t" style="top:365.00px;font-size:12px;font-weight:700;right:546.30px;transform-origin:100% 50%;transform:scaleX(1.0080);">1,107,939</div>
<div class="t" style="top:365.00px;font-size:12px;font-weight:700;right:447.30px;transform-origin:100% 50%;transform:scaleX(1.0080);">51,604</div>
<div class="t" style="top:365.00px;font-size:12px;font-weight:700;right:348.30px;transform-origin:100% 50%;transform:scaleX(1.0080);">84,154</div>
<div class="t" style="top:365.00px;font-size:12px;font-weight:700;right:249.30px;transform-origin:100% 50%;transform:scaleX(1.0080);">16,360</div>
<div class="t" style="top:365.00px;font-size:12px;font-weight:700;right:150.30px;transform-origin:100% 50%;transform:scaleX(1.0080);">19,229</div>
<div class="t" style="top:365.00px;font-size:12px;font-weight:700;right:51.30px;transform-origin:100% 50%;transform:scaleX(1.0080);">8,847,971</div>
<div class="t" style="top:401.00px;font-size:12px;font-weight:700;left:7.20px;transform:scaleX(0.9111);">Trading Income</div>
<div class="t" style="top:401.00px;font-size:12px;font-weight:700;right:1239.30px;transform-origin:100% 50%;transform:scaleX(1.0080);">358,524</div>
<div class="t" style="top:401.00px;font-size:12px;font-weight:700;right:1140.30px;transform-origin:100% 50%;transform:scaleX(1.0080);">285,223</div>
<div class="t" style="top:401.00px;font-size:12px;font-weight:700;right:1041.30px;transform-origin:100% 50%;transform:scaleX(1.0080);">1,534,655</div>
<div class="t" style="top:401.00px;font-size:12px;font-weight:700;right:942.30px;transform-origin:100% 50%;transform:scaleX(1.0080);">1,182,974</div>
<div class="t" style="top:401.00px;font-size:12px;font-weight:700;right:843.30px;transform-origin:100% 50%;transform:scaleX(1.0080);">1,484,944</div>
<div class="t" style="top:401.00px;font-size:12px;font-weight:700;right:744.30px;transform-origin:100% 50%;transform:scaleX(1.0080);">1,486,212</div>
<div class="t" style="top:401.00px;font-size:12px;font-weight:700;right:645.30px;transform-origin:100% 50%;transform:scaleX(1.0080);">1,236,153</div>
<div class="t" style="top:401.00px;font-size:12px;font-weight:700;right:546.30px;transform-origin:100% 50%;transform:scaleX(1.0080);">1,107,939</div>
<div class="t" style="top:401.00px;font-size:12px;font-weight:700;right:447.30px;transform-origin:100% 50%;transform:scaleX(1.0080);">51,604</div>
<div class="t" style="top:401.00px;font-size:12px;font-weight:700;right:348.30px;transform-origin:100% 50%;transform:scaleX(1.0080);">84,154</div>
<div class="t" style="top:401.00px;font-size:12px;font-weight:700;right:249.30px;transform-origin:100% 50%;transform:scaleX(1.0080);">16,360</div>
<div class="t" style="top:401.00px;font-size:12px;font-weight:700;right:150.30px;transform-origin:100% 50%;transform:scaleX(1.0080);">19,229</div>
<div class="t" style="top:401.00px;font-size:12px;font-weight:700;right:51.30px;transform-origin:100% 50%;transform:scaleX(1.0080);">8,847,971</div>
<div class="t" style="top:437.00px;font-size:12px;left:7.20px;transform:scaleX(0.9203);">50010 - COGS - Jewelry</div>
<div class="t" style="top:438.00px;font-size:12px;left:298.10px;transform:scaleX(0.9462);">Sales Module</div>
<div class="t" style="top:437.00px;font-size:12px;left:610.80px;transform-origin:50% 50%;transform:translateX(-50%) scaleX(1.0000);">-</div>
<div class="t" style="top:437.00px;font-size:12px;right:1041.30px;transform-origin:100% 50%;transform:scaleX(1.0080);">614,516</div>
<div class="t" style="top:437.00px;font-size:12px;right:942.30px;transform-origin:100% 50%;transform:scaleX(1.0080);">472,194</div>
<div class="t" style="top:437.00px;font-size:12px;right:843.30px;transform-origin:100% 50%;transform:scaleX(1.0080);">594,325</div>
<div class="t" style="top:437.00px;font-size:12px;right:744.30px;transform-origin:100% 50%;transform:scaleX(1.0080);">596,445</div>
<div class="t" style="top:437.00px;font-size:12px;right:645.30px;transform-origin:100% 50%;transform:scaleX(1.0080);">496,240</div>
<div class="t" style="top:437.00px;font-size:12px;right:546.30px;transform-origin:100% 50%;transform:scaleX(1.0080);">442,469</div>
<div class="t" style="top:437.00px;font-size:12px;right:447.30px;transform-origin:100% 50%;transform:scaleX(1.0080);">15,197</div>
<div class="t" style="top:437.00px;font-size:12px;right:348.30px;transform-origin:100% 50%;transform:scaleX(1.0080);">26,007</div>
<div class="t" style="top:437.00px;font-size:12px;left:1501.80px;transform-origin:50% 50%;transform:translateX(-50%) scaleX(1.0000);">-</div>
<div class="t" style="top:437.00px;font-size:12px;left:1600.80px;transform-origin:50% 50%;transform:translateX(-50%) scaleX(1.0000);">-</div>
<div class="t" style="top:437.00px;font-size:12px;right:51.30px;transform-origin:100% 50%;transform:scaleX(1.0080);">3,257,394</div>
<div class="t" style="top:455.00px;font-size:12px;left:7.20px;transform:scaleX(0.9371);">50020 - COGS - Piercing</div>
<div class="t" style="top:455.00px;font-size:12px;right:1239.30px;transform-origin:100% 50%;transform:scaleX(1.0080);">2,687</div>
<div class="t" style="top:455.00px;font-size:12px;right:1140.30px;transform-origin:100% 50%;transform:scaleX(1.0080);">3,338</div>
<div class="t" style="top:455.00px;font-size:12px;right:1041.30px;transform-origin:100% 50%;transform:scaleX(1.0080);">833</div>
<div class="t" style="top:455.00px;font-size:12px;right:942.30px;transform-origin:100% 50%;transform:scaleX(1.0080);">833</div>
<div class="t" style="top:455.00px;font-size:12px;right:843.30px;transform-origin:100% 50%;transform:scaleX(1.0080);">833</div>
<div class="t" style="top:455.00px;font-size:12px;right:744.30px;transform-origin:100% 50%;transform:scaleX(1.0080);">833</div>
<div class="t" style="top:455.00px;font-size:12px;right:645.30px;transform-origin:100% 50%;transform:scaleX(1.0080);">833</div>
<div class="t" style="top:455.00px;font-size:12px;right:546.30px;transform-origin:100% 50%;transform:scaleX(1.0080);">833</div>
<div class="t" style="top:455.00px;font-size:12px;right:447.30px;transform-origin:100% 50%;transform:scaleX(1.0080);">833</div>
<div class="t" style="top:455.00px;font-size:12px;right:348.30px;transform-origin:100% 50%;transform:scaleX(1.0080);">833</div>
<div class="t" style="top:455.00px;font-size:12px;right:249.30px;transform-origin:100% 50%;transform:scaleX(1.0080);">500</div>
<div class="t" style="top:455.00px;font-size:12px;right:150.30px;transform-origin:100% 50%;transform:scaleX(1.0080);">833</div>
<div class="t" style="top:455.00px;font-size:12px;right:51.30px;transform-origin:100% 50%;transform:scaleX(1.0080);">14,025</div>
<div class="t" style="top:473.00px;font-size:12px;left:7.20px;transform:scaleX(0.9383);">50030 - COGS - Shipping Freight and Delivery</div>
<div class="t" style="top:473.00px;font-size:12px;right:1239.30px;transform-origin:100% 50%;transform:scaleX(1.0080);">1,235</div>
<div class="t" style="top:473.00px;font-size:12px;right:1140.30px;transform-origin:100% 50%;transform:scaleX(1.0080);">139</div>
<div class="t" style="top:473.00px;font-size:12px;left:709.80px;transform-origin:50% 50%;transform:translateX(-50%) scaleX(1.0000);">-</div>
<div class="t" style="top:473.00px;font-size:12px;left:808.80px;transform-origin:50% 50%;transform:translateX(-50%) scaleX(1.0000);">-</div>
<div class="t" style="top:473.00px;font-size:12px;left:907.80px;transform-origin:50% 50%;transform:translateX(-50%) scaleX(1.0000);">-</div>
<div class="t" style="top:473.00px;font-size:12px;left:1006.80px;transform-origin:50% 50%;transform:translateX(-50%) scaleX(1.0000);">-</div>
<div class="t" style="top:473.00px;font-size:12px;left:1105.80px;transform-origin:50% 50%;transform:translateX(-50%) scaleX(1.0000);">-</div>
<div class="t" style="top:473.00px;font-size:12px;left:1204.80px;transform-origin:50% 50%;transform:translateX(-50%) scaleX(1.0000);">-</div>
<div class="t" style="top:473.00px;font-size:12px;left:1303.80px;transform-origin:50% 50%;transform:translateX(-50%) scaleX(1.0000);">-</div>
<div class="t" style="top:473.00px;font-size:12px;left:1402.80px;transform-origin:50% 50%;transform:translateX(-50%) scaleX(1.0000);">-</div>
<div class="t" style="top:473.00px;font-size:12px;left:1501.80px;transform-origin:50% 50%;transform:translateX(-50%) scaleX(1.0000);">-</div>
<div class="t" style="top:473.00px;font-size:12px;left:1600.80px;transform-origin:50% 50%;transform:translateX(-50%) scaleX(1.0000);">-</div>
<div class="t" style="top:473.00px;font-size:12px;right:51.30px;transform-origin:100% 50%;transform:scaleX(1.0080);">1,374</div>
<div class="t" style="top:491.00px;font-size:12px;left:7.20px;transform:scaleX(0.9450);">50050 - COGS - Customs &amp; Duty</div>
<div class="t" style="top:491.00px;font-size:12px;right:1239.30px;transform-origin:100% 50%;transform:scaleX(1.0080);">2,391</div>
<div class="t" style="top:491.00px;font-size:12px;left:610.80px;transform-origin:50% 50%;transform:translateX(-50%) scaleX(1.0000);">-</div>
<div class="t" style="top:491.00px;font-size:12px;left:709.80px;transform-origin:50% 50%;transform:translateX(-50%) scaleX(1.0000);">-</div>
<div class="t" style="top:491.00px;font-size:12px;left:808.80px;transform-origin:50% 50%;transform:translateX(-50%) scaleX(1.0000);">-</div>
<div class="t" style="top:491.00px;font-size:12px;left:907.80px;transform-origin:50% 50%;transform:translateX(-50%) scaleX(1.0000);">-</div>
<div class="t" style="top:491.00px;font-size:12px;left:1006.80px;transform-origin:50% 50%;transform:translateX(-50%) scaleX(1.0000);">-</div>
<div class="t" style="top:491.00px;font-size:12px;left:1105.80px;transform-origin:50% 50%;transform:translateX(-50%) scaleX(1.0000);">-</div>
<div class="t" style="top:491.00px;font-size:12px;left:1204.80px;transform-origin:50% 50%;transform:translateX(-50%) scaleX(1.0000);">-</div>
<div class="t" style="top:491.00px;font-size:12px;left:1303.80px;transform-origin:50% 50%;transform:translateX(-50%) scaleX(1.0000);">-</div>
<div class="t" style="top:491.00px;font-size:12px;right:348.30px;transform-origin:100% 50%;transform:scaleX(1.0080);">500</div>
<div class="t" style="top:491.00px;font-size:12px;left:1501.80px;transform-origin:50% 50%;transform:translateX(-50%) scaleX(1.0000);">-</div>
<div class="t" style="top:491.00px;font-size:12px;left:1600.80px;transform-origin:50% 50%;transform:translateX(-50%) scaleX(1.0000);">-</div>
<div class="t" style="top:491.00px;font-size:12px;right:51.30px;transform-origin:100% 50%;transform:scaleX(1.0080);">2,891</div>
<div class="t" style="top:509.00px;font-size:12px;left:7.20px;transform:scaleX(0.9240);">50061 - COGS - Repairs</div>
<div class="t" style="top:509.00px;font-size:12px;right:1239.30px;transform-origin:100% 50%;transform:scaleX(1.0080);">58</div>
<div class="t" style="top:509.00px;font-size:12px;left:610.80px;transform-origin:50% 50%;transform:translateX(-50%) scaleX(1.0000);">-</div>
<div class="t" style="top:509.00px;font-size:12px;left:709.80px;transform-origin:50% 50%;transform:translateX(-50%) scaleX(1.0000);">-</div>
<div class="t" style="top:509.00px;font-size:12px;left:808.80px;transform-origin:50% 50%;transform:translateX(-50%) scaleX(1.0000);">-</div>
<div class="t" style="top:509.00px;font-size:12px;left:907.80px;transform-origin:50% 50%;transform:translateX(-50%) scaleX(1.0000);">-</div>
<div class="t" style="top:509.00px;font-size:12px;left:1006.80px;transform-origin:50% 50%;transform:translateX(-50%) scaleX(1.0000);">-</div>
<div class="t" style="top:509.00px;font-size:12px;left:1105.80px;transform-origin:50% 50%;transform:translateX(-50%) scaleX(1.0000);">-</div>
<div class="t" style="top:509.00px;font-size:12px;left:1204.80px;transform-origin:50% 50%;transform:translateX(-50%) scaleX(1.0000);">-</div>
<div class="t" style="top:509.00px;font-size:12px;left:1303.80px;transform-origin:50% 50%;transform:translateX(-50%) scaleX(1.0000);">-</div>
<div class="t" style="top:509.00px;font-size:12px;left:1402.80px;transform-origin:50% 50%;transform:translateX(-50%) scaleX(1.0000);">-</div>
<div class="t" style="top:509.00px;font-size:12px;left:1501.80px;transform-origin:50% 50%;transform:translateX(-50%) scaleX(1.0000);">-</div>
<div class="t" style="top:509.00px;font-size:12px;left:1600.80px;transform-origin:50% 50%;transform:translateX(-50%) scaleX(1.0000);">-</div>
<div class="t" style="top:509.00px;font-size:12px;right:51.30px;transform-origin:100% 50%;transform:scaleX(1.0080);">58</div>
<div class="t" style="top:527.00px;font-size:12px;font-weight:700;left:7.20px;transform:scaleX(0.9082);">Direct Costs</div>
<div class="t" style="top:527.00px;font-size:12px;font-weight:700;right:1239.30px;transform-origin:100% 50%;transform:scaleX(1.0080);">6,370</div>
<div class="t" style="top:527.00px;font-size:12px;font-weight:700;right:1140.30px;transform-origin:100% 50%;transform:scaleX(1.0080);">3,477</div>
<div class="t" style="top:527.00px;font-size:12px;font-weight:700;right:1041.30px;transform-origin:100% 50%;transform:scaleX(1.0080);">615,350</div>
<div class="t" style="top:527.00px;font-size:12px;font-weight:700;right:942.30px;transform-origin:100% 50%;transform:scaleX(1.0080);">473,027</div>
<div class="t" style="top:527.00px;font-size:12px;font-weight:700;right:843.30px;transform-origin:100% 50%;transform:scaleX(1.0080);">595,158</div>
<div class="t" style="top:527.00px;font-size:12px;font-weight:700;right:744.30px;transform-origin:100% 50%;transform:scaleX(1.0080);">597,278</div>
<div class="t" style="top:527.00px;font-size:12px;font-weight:700;right:645.30px;transform-origin:100% 50%;transform:scaleX(1.0080);">497,073</div>
<div class="t" style="top:527.00px;font-size:12px;font-weight:700;right:546.30px;transform-origin:100% 50%;transform:scaleX(1.0080);">443,303</div>
<div class="t" style="top:527.00px;font-size:12px;font-weight:700;right:447.30px;transform-origin:100% 50%;transform:scaleX(1.0080);">16,030</div>
<div class="t" style="top:527.00px;font-size:12px;font-weight:700;right:348.30px;transform-origin:100% 50%;transform:scaleX(1.0080);">27,341</div>
<div class="t" style="top:527.00px;font-size:12px;font-weight:700;right:249.30px;transform-origin:100% 50%;transform:scaleX(1.0080);">500</div>
<div class="t" style="top:527.00px;font-size:12px;font-weight:700;right:150.30px;transform-origin:100% 50%;transform:scaleX(1.0080);">833</div>
<div class="t" style="top:527.00px;font-size:12px;font-weight:700;right:51.30px;transform-origin:100% 50%;transform:scaleX(1.0080);">3,275,741</div>
<div class="t" style="top:563.00px;font-size:12px;font-weight:700;color:#E8912A;left:7.20px;transform:scaleX(0.8883);">Gross Profit</div>
<div class="t" style="top:563.00px;font-size:12px;font-weight:700;color:#E8912A;right:1239.30px;transform-origin:100% 50%;transform:scaleX(1.0080);">352,154</div>
<div class="t" style="top:563.00px;font-size:12px;font-weight:700;color:#E8912A;right:1140.30px;transform-origin:100% 50%;transform:scaleX(1.0080);">281,745</div>
<div class="t" style="top:563.00px;font-size:12px;font-weight:700;color:#E8912A;right:1041.30px;transform-origin:100% 50%;transform:scaleX(1.0080);">919,305</div>
<div class="t" style="top:563.00px;font-size:12px;font-weight:700;color:#E8912A;right:942.30px;transform-origin:100% 50%;transform:scaleX(1.0080);">709,947</div>
<div class="t" style="top:563.00px;font-size:12px;font-weight:700;color:#E8912A;right:843.30px;transform-origin:100% 50%;transform:scaleX(1.0080);">889,786</div>
<div class="t" style="top:563.00px;font-size:12px;font-weight:700;color:#E8912A;right:744.30px;transform-origin:100% 50%;transform:scaleX(1.0080);">888,934</div>
<div class="t" style="top:563.00px;font-size:12px;font-weight:700;color:#E8912A;right:645.30px;transform-origin:100% 50%;transform:scaleX(1.0080);">739,079</div>
<div class="t" style="top:563.00px;font-size:12px;font-weight:700;color:#E8912A;right:546.30px;transform-origin:100% 50%;transform:scaleX(1.0080);">664,636</div>
<div class="t" style="top:563.00px;font-size:12px;font-weight:700;color:#E8912A;right:447.30px;transform-origin:100% 50%;transform:scaleX(1.0080);">35,574</div>
<div class="t" style="top:563.00px;font-size:12px;font-weight:700;color:#E8912A;right:348.30px;transform-origin:100% 50%;transform:scaleX(1.0080);">56,813</div>
<div class="t" style="top:563.00px;font-size:12px;font-weight:700;color:#E8912A;right:249.30px;transform-origin:100% 50%;transform:scaleX(1.0080);">15,860</div>
<div class="t" style="top:563.00px;font-size:12px;font-weight:700;color:#E8912A;right:150.30px;transform-origin:100% 50%;transform:scaleX(1.0080);">18,396</div>
<div class="t" style="top:563.00px;font-size:12px;font-weight:700;color:#E8912A;right:51.30px;transform-origin:100% 50%;transform:scaleX(1.0080);">5,572,230</div>
<div class="t" style="top:599.00px;font-size:12px;left:7.20px;transform:scaleX(0.9636);">61112 - SUTA</div>
<div class="t" style="top:600.00px;font-size:12px;left:298.10px;transform:scaleX(0.9537);">Payroll Module</div>
<div class="t" style="top:599.00px;font-size:12px;left:610.80px;transform-origin:50% 50%;transform:translateX(-50%) scaleX(1.0000);">-</div>
<div class="t" style="top:599.00px;font-size:12px;left:709.80px;transform-origin:50% 50%;transform:translateX(-50%) scaleX(1.0000);">-</div>
<div class="t" style="top:599.00px;font-size:12px;left:808.80px;transform-origin:50% 50%;transform:translateX(-50%) scaleX(1.0000);">-</div>
<div class="t" style="top:599.00px;font-size:12px;left:907.80px;transform-origin:50% 50%;transform:translateX(-50%) scaleX(1.0000);">-</div>
<div class="t" style="top:599.00px;font-size:12px;left:1006.80px;transform-origin:50% 50%;transform:translateX(-50%) scaleX(1.0000);">-</div>
<div class="t" style="top:599.00px;font-size:12px;left:1105.80px;transform-origin:50% 50%;transform:translateX(-50%) scaleX(1.0000);">-</div>
<div class="t" style="top:599.00px;font-size:12px;left:1204.80px;transform-origin:50% 50%;transform:translateX(-50%) scaleX(1.0000);">-</div>
<div class="t" style="top:599.00px;font-size:12px;left:1303.80px;transform-origin:50% 50%;transform:translateX(-50%) scaleX(1.0000);">-</div>
<div class="t" style="top:599.00px;font-size:12px;left:1402.80px;transform-origin:50% 50%;transform:translateX(-50%) scaleX(1.0000);">-</div>
<div class="t" style="top:599.00px;font-size:12px;left:1501.80px;transform-origin:50% 50%;transform:translateX(-50%) scaleX(1.0000);">-</div>
<div class="t" style="top:599.00px;font-size:12px;left:1600.80px;transform-origin:50% 50%;transform:translateX(-50%) scaleX(1.0000);">-</div>
<div class="t" style="top:599.00px;font-size:12px;left:1699.80px;transform-origin:50% 50%;transform:translateX(-50%) scaleX(1.0000);">-</div>
<div class="t" style="top:617.00px;font-size:12px;left:7.20px;transform:scaleX(0.9735);">61111 - FUTA</div>
<div class="t" style="top:618.00px;font-size:12px;left:298.10px;transform:scaleX(0.9537);">Payroll Module</div>
<div class="t" style="top:617.00px;font-size:12px;left:610.80px;transform-origin:50% 50%;transform:translateX(-50%) scaleX(1.0000);">-</div>
<div class="t" style="top:617.00px;font-size:12px;left:709.80px;transform-origin:50% 50%;transform:translateX(-50%) scaleX(1.0000);">-</div>
<div class="t" style="top:617.00px;font-size:12px;left:808.80px;transform-origin:50% 50%;transform:translateX(-50%) scaleX(1.0000);">-</div>
<div class="t" style="top:617.00px;font-size:12px;left:907.80px;transform-origin:50% 50%;transform:translateX(-50%) scaleX(1.0000);">-</div>
<div class="t" style="top:617.00px;font-size:12px;left:1006.80px;transform-origin:50% 50%;transform:translateX(-50%) scaleX(1.0000);">-</div>
<div class="t" style="top:617.00px;font-size:12px;left:1105.80px;transform-origin:50% 50%;transform:translateX(-50%) scaleX(1.0000);">-</div>
<div class="t" style="top:617.00px;font-size:12px;left:1204.80px;transform-origin:50% 50%;transform:translateX(-50%) scaleX(1.0000);">-</div>
<div class="t" style="top:617.00px;font-size:12px;left:1303.80px;transform-origin:50% 50%;transform:translateX(-50%) scaleX(1.0000);">-</div>
<div class="t" style="top:617.00px;font-size:12px;left:1402.80px;transform-origin:50% 50%;transform:translateX(-50%) scaleX(1.0000);">-</div>
<div class="t" style="top:617.00px;font-size:12px;left:1501.80px;transform-origin:50% 50%;transform:translateX(-50%) scaleX(1.0000);">-</div>
<div class="t" style="top:617.00px;font-size:12px;left:1600.80px;transform-origin:50% 50%;transform:translateX(-50%) scaleX(1.0000);">-</div>
<div class="t" style="top:617.00px;font-size:12px;left:1699.80px;transform-origin:50% 50%;transform:translateX(-50%) scaleX(1.0000);">-</div>
<div class="t" style="top:635.00px;font-size:12px;left:7.20px;transform:scaleX(0.9673);">70030 - Depreciation Exp-Leasehold Improvements</div>
<div class="t" style="top:635.00px;font-size:12px;right:1239.30px;transform-origin:100% 50%;transform:scaleX(1.0080);">2,986</div>
<div class="t" style="top:635.00px;font-size:12px;right:1140.30px;transform-origin:100% 50%;transform:scaleX(1.0080);">2,986</div>
<div class="t" style="top:635.00px;font-size:12px;right:1041.30px;transform-origin:100% 50%;transform:scaleX(1.0080);">2,986</div>
<div class="t" style="top:635.00px;font-size:12px;right:942.30px;transform-origin:100% 50%;transform:scaleX(1.0080);">2,986</div>
<div class="t" style="top:635.00px;font-size:12px;right:843.30px;transform-origin:100% 50%;transform:scaleX(1.0080);">2,986</div>
<div class="t" style="top:635.00px;font-size:12px;right:744.30px;transform-origin:100% 50%;transform:scaleX(1.0080);">2,986</div>
<div class="t" style="top:635.00px;font-size:12px;right:645.30px;transform-origin:100% 50%;transform:scaleX(1.0080);">2,986</div>
<div class="t" style="top:635.00px;font-size:12px;right:546.30px;transform-origin:100% 50%;transform:scaleX(1.0080);">2,986</div>
<div class="t" style="top:635.00px;font-size:12px;right:447.30px;transform-origin:100% 50%;transform:scaleX(1.0080);">2,986</div>
<div class="t" style="top:635.00px;font-size:12px;right:348.30px;transform-origin:100% 50%;transform:scaleX(1.0080);">2,986</div>
<div class="t" style="top:635.00px;font-size:12px;right:249.30px;transform-origin:100% 50%;transform:scaleX(1.0080);">2,986</div>
<div class="t" style="top:635.00px;font-size:12px;right:150.30px;transform-origin:100% 50%;transform:scaleX(1.0080);">2,986</div>
<div class="t" style="top:635.00px;font-size:12px;right:51.30px;transform-origin:100% 50%;transform:scaleX(1.0080);">35,830</div>
<div class="t" style="top:653.00px;font-size:12px;left:7.20px;transform:scaleX(0.9604);">70020 - Depreciation Exp-Furniture &amp; Fixtures</div>
<div class="t" style="top:653.00px;font-size:12px;right:1239.30px;transform-origin:100% 50%;transform:scaleX(1.0080);">2,015</div>
<div class="t" style="top:653.00px;font-size:12px;right:1140.30px;transform-origin:100% 50%;transform:scaleX(1.0080);">2,015</div>
<div class="t" style="top:653.00px;font-size:12px;right:1041.30px;transform-origin:100% 50%;transform:scaleX(1.0080);">2,015</div>
<div class="t" style="top:653.00px;font-size:12px;right:942.30px;transform-origin:100% 50%;transform:scaleX(1.0080);">2,015</div>
<div class="t" style="top:653.00px;font-size:12px;right:843.30px;transform-origin:100% 50%;transform:scaleX(1.0080);">2,015</div>
<div class="t" style="top:653.00px;font-size:12px;right:744.30px;transform-origin:100% 50%;transform:scaleX(1.0080);">2,015</div>
<div class="t" style="top:653.00px;font-size:12px;right:645.30px;transform-origin:100% 50%;transform:scaleX(1.0080);">2,015</div>
<div class="t" style="top:653.00px;font-size:12px;right:546.30px;transform-origin:100% 50%;transform:scaleX(1.0080);">2,015</div>
<div class="t" style="top:653.00px;font-size:12px;right:447.30px;transform-origin:100% 50%;transform:scaleX(1.0080);">2,015</div>
<div class="t" style="top:653.00px;font-size:12px;right:348.30px;transform-origin:100% 50%;transform:scaleX(1.0080);">2,015</div>
<div class="t" style="top:653.00px;font-size:12px;right:249.30px;transform-origin:100% 50%;transform:scaleX(1.0080);">2,015</div>
<div class="t" style="top:653.00px;font-size:12px;right:150.30px;transform-origin:100% 50%;transform:scaleX(1.0080);">2,015</div>
<div class="t" style="top:653.00px;font-size:12px;right:51.30px;transform-origin:100% 50%;transform:scaleX(1.0080);">24,179</div>
<div class="t" style="top:671.00px;font-size:12px;left:7.20px;transform:scaleX(0.9773);">70010 - Depreciation Exp-Computer and Equipment</div>
<div class="t" style="top:671.00px;font-size:12px;right:1239.30px;transform-origin:100% 50%;transform:scaleX(1.0080);">339</div>
<div class="t" style="top:671.00px;font-size:12px;right:1140.30px;transform-origin:100% 50%;transform:scaleX(1.0080);">339</div>
<div class="t" style="top:671.00px;font-size:12px;right:1041.30px;transform-origin:100% 50%;transform:scaleX(1.0080);">339</div>
<div class="t" style="top:671.00px;font-size:12px;right:942.30px;transform-origin:100% 50%;transform:scaleX(1.0080);">339</div>
<div class="t" style="top:671.00px;font-size:12px;right:843.30px;transform-origin:100% 50%;transform:scaleX(1.0080);">339</div>
<div class="t" style="top:671.00px;font-size:12px;right:744.30px;transform-origin:100% 50%;transform:scaleX(1.0080);">339</div>
<div class="t" style="top:671.00px;font-size:12px;right:645.30px;transform-origin:100% 50%;transform:scaleX(1.0080);">339</div>
<div class="t" style="top:671.00px;font-size:12px;right:546.30px;transform-origin:100% 50%;transform:scaleX(1.0080);">339</div>
<div class="t" style="top:671.00px;font-size:12px;right:447.30px;transform-origin:100% 50%;transform:scaleX(1.0080);">339</div>
<div class="t" style="top:671.00px;font-size:12px;right:348.30px;transform-origin:100% 50%;transform:scaleX(1.0080);">339</div>
<div class="t" style="top:671.00px;font-size:12px;right:249.30px;transform-origin:100% 50%;transform:scaleX(1.0080);">339</div>
<div class="t" style="top:671.00px;font-size:12px;right:150.30px;transform-origin:100% 50%;transform:scaleX(1.0080);">339</div>
<div class="t" style="top:671.00px;font-size:12px;right:51.30px;transform-origin:100% 50%;transform:scaleX(1.0080);">4,067</div>
<div class="t" style="top:689.00px;font-size:12px;left:7.20px;transform:scaleX(0.9743);">61405 - Printing and Stationery</div>
<div class="t" style="top:690.00px;font-size:12px;left:298.10px;transform:scaleX(0.8689);">LY even</div>
<div class="t" style="top:690.00px;font-size:12px;right:1325.10px;transform-origin:100% 50%;transform:scaleX(1.0080);">1.03</div>
<div class="t" style="top:689.00px;font-size:12px;right:1239.30px;transform-origin:100% 50%;transform:scaleX(1.0080);">232</div>
<div class="t" style="top:689.00px;font-size:12px;left:610.80px;transform-origin:50% 50%;transform:translateX(-50%) scaleX(1.0000);">-</div>
<div class="t" style="top:689.00px;font-size:12px;right:1041.30px;transform-origin:100% 50%;transform:scaleX(1.0080);">233</div>
<div class="t" style="top:689.00px;font-size:12px;right:942.30px;transform-origin:100% 50%;transform:scaleX(1.0080);">233</div>
<div class="t" style="top:689.00px;font-size:12px;right:843.30px;transform-origin:100% 50%;transform:scaleX(1.0080);">233</div>
<div class="t" style="top:689.00px;font-size:12px;right:744.30px;transform-origin:100% 50%;transform:scaleX(1.0080);">233</div>
<div class="t" style="top:689.00px;font-size:12px;right:645.30px;transform-origin:100% 50%;transform:scaleX(1.0080);">233</div>
<div class="t" style="top:689.00px;font-size:12px;right:546.30px;transform-origin:100% 50%;transform:scaleX(1.0080);">233</div>
<div class="t" style="top:689.00px;font-size:12px;right:447.30px;transform-origin:100% 50%;transform:scaleX(1.0080);">233</div>
<div class="t" style="top:689.00px;font-size:12px;right:348.30px;transform-origin:100% 50%;transform:scaleX(1.0080);">233</div>
<div class="t" style="top:689.00px;font-size:12px;right:249.30px;transform-origin:100% 50%;transform:scaleX(1.0080);">233</div>
<div class="t" style="top:689.00px;font-size:12px;right:150.30px;transform-origin:100% 50%;transform:scaleX(1.0080);">233</div>
<div class="t" style="top:689.00px;font-size:12px;right:51.30px;transform-origin:100% 50%;transform:scaleX(1.0080);">2,567</div>
<div class="t" style="top:707.00px;font-size:12px;left:7.20px;transform:scaleX(0.9653);">61404 - Office Supplies Expenses</div>
<div class="t" style="top:708.00px;font-size:12px;left:298.10px;transform:scaleX(0.9741);">Line</div>
<div class="t" style="top:707.00px;font-size:12px;right:1239.30px;transform-origin:100% 50%;transform:scaleX(1.0080);">364</div>
<div class="t" style="top:707.00px;font-size:12px;right:1140.30px;transform-origin:100% 50%;transform:scaleX(1.0080);">262</div>
<div class="t" style="top:707.00px;font-size:12px;right:1041.30px;transform-origin:100% 50%;transform:scaleX(1.0080);">50</div>
<div class="t" style="top:707.00px;font-size:12px;right:942.30px;transform-origin:100% 50%;transform:scaleX(1.0080);">50</div>
<div class="t" style="top:707.00px;font-size:12px;right:843.30px;transform-origin:100% 50%;transform:scaleX(1.0080);">50</div>
<div class="t" style="top:707.00px;font-size:12px;right:744.30px;transform-origin:100% 50%;transform:scaleX(1.0080);">50</div>
<div class="t" style="top:707.00px;font-size:12px;right:645.30px;transform-origin:100% 50%;transform:scaleX(1.0080);">50</div>
<div class="t" style="top:707.00px;font-size:12px;right:546.30px;transform-origin:100% 50%;transform:scaleX(1.0080);">50</div>
<div class="t" style="top:707.00px;font-size:12px;right:447.30px;transform-origin:100% 50%;transform:scaleX(1.0080);">50</div>
<div class="t" style="top:707.00px;font-size:12px;right:348.30px;transform-origin:100% 50%;transform:scaleX(1.0080);">50</div>
<div class="t" style="top:707.00px;font-size:12px;right:249.30px;transform-origin:100% 50%;transform:scaleX(1.0080);">50</div>
<div class="t" style="top:707.00px;font-size:12px;right:150.30px;transform-origin:100% 50%;transform:scaleX(1.0080);">50</div>
<div class="t" style="top:707.00px;font-size:12px;right:51.30px;transform-origin:100% 50%;transform:scaleX(1.0080);">1,126</div>
<div class="t" style="top:725.00px;font-size:12px;left:7.20px;transform:scaleX(0.9587);">61403 - Licenses and Permits</div>
<div class="t" style="top:726.00px;font-size:12px;left:298.10px;transform:scaleX(0.8689);">LY even</div>
<div class="t" style="top:726.00px;font-size:12px;right:1325.10px;transform-origin:100% 50%;transform:scaleX(1.0080);">1.03</div>
<div class="t" style="top:725.00px;font-size:12px;right:1239.30px;transform-origin:100% 50%;transform:scaleX(1.0080);">38</div>
<div class="t" style="top:725.00px;font-size:12px;right:1140.30px;transform-origin:100% 50%;transform:scaleX(1.0080);">39</div>
<div class="t" style="top:725.00px;font-size:12px;right:1041.30px;transform-origin:100% 50%;transform:scaleX(1.0080);">54</div>
<div class="t" style="top:725.00px;font-size:12px;right:942.30px;transform-origin:100% 50%;transform:scaleX(1.0080);">54</div>
<div class="t" style="top:725.00px;font-size:12px;right:843.30px;transform-origin:100% 50%;transform:scaleX(1.0080);">54</div>
<div class="t" style="top:725.00px;font-size:12px;right:744.30px;transform-origin:100% 50%;transform:scaleX(1.0080);">54</div>
<div class="t" style="top:725.00px;font-size:12px;right:645.30px;transform-origin:100% 50%;transform:scaleX(1.0080);">54</div>
<div class="t" style="top:725.00px;font-size:12px;right:546.30px;transform-origin:100% 50%;transform:scaleX(1.0080);">54</div>
<div class="t" style="top:725.00px;font-size:12px;right:447.30px;transform-origin:100% 50%;transform:scaleX(1.0080);">54</div>
<div class="t" style="top:725.00px;font-size:12px;right:348.30px;transform-origin:100% 50%;transform:scaleX(1.0080);">54</div>
<div class="t" style="top:725.00px;font-size:12px;right:249.30px;transform-origin:100% 50%;transform:scaleX(1.0080);">54</div>
<div class="t" style="top:725.00px;font-size:12px;right:150.30px;transform-origin:100% 50%;transform:scaleX(1.0080);">54</div>
<div class="t" style="top:725.00px;font-size:12px;right:51.30px;transform-origin:100% 50%;transform:scaleX(1.0080);">613</div>
<div class="t" style="top:743.00px;font-size:12px;left:7.20px;transform:scaleX(0.9249);">61401 - Bank Charges &amp; Fees</div>
<div class="t" style="top:744.00px;font-size:12px;left:298.10px;transform:scaleX(0.8689);">LY even</div>
<div class="t" style="top:744.00px;font-size:12px;right:1325.10px;transform-origin:100% 50%;transform:scaleX(1.0080);">1.03</div>
<div class="t" style="top:743.00px;font-size:12px;right:1239.30px;transform-origin:100% 50%;transform:scaleX(1.0080);">13</div>
<div class="t" style="top:743.00px;font-size:12px;right:1140.30px;transform-origin:100% 50%;transform:scaleX(1.0080);">6</div>
<div class="t" style="top:743.00px;font-size:12px;right:1041.30px;transform-origin:100% 50%;transform:scaleX(1.0080);">416</div>
<div class="t" style="top:743.00px;font-size:12px;right:942.30px;transform-origin:100% 50%;transform:scaleX(1.0080);">416</div>
<div class="t" style="top:743.00px;font-size:12px;right:843.30px;transform-origin:100% 50%;transform:scaleX(1.0080);">416</div>
<div class="t" style="top:743.00px;font-size:12px;right:744.30px;transform-origin:100% 50%;transform:scaleX(1.0080);">416</div>
<div class="t" style="top:743.00px;font-size:12px;right:645.30px;transform-origin:100% 50%;transform:scaleX(1.0080);">416</div>
<div class="t" style="top:743.00px;font-size:12px;right:546.30px;transform-origin:100% 50%;transform:scaleX(1.0080);">416</div>
<div class="t" style="top:743.00px;font-size:12px;right:447.30px;transform-origin:100% 50%;transform:scaleX(1.0080);">416</div>
<div class="t" style="top:743.00px;font-size:12px;right:348.30px;transform-origin:100% 50%;transform:scaleX(1.0080);">416</div>
<div class="t" style="top:743.00px;font-size:12px;right:249.30px;transform-origin:100% 50%;transform:scaleX(1.0080);">416</div>
<div class="t" style="top:743.00px;font-size:12px;right:150.30px;transform-origin:100% 50%;transform:scaleX(1.0080);">416</div>
<div class="t" style="top:743.00px;font-size:12px;right:51.30px;transform-origin:100% 50%;transform:scaleX(1.0080);">4,183</div>
<div class="t" style="top:761.00px;font-size:12px;left:7.20px;transform:scaleX(0.9495);">61302 - IT Hardware and Software</div>
<div class="t" style="top:762.00px;font-size:12px;left:298.10px;transform:scaleX(0.8689);">LY even</div>
<div class="t" style="top:762.00px;font-size:12px;right:1325.10px;transform-origin:100% 50%;transform:scaleX(1.0080);">1.03</div>
<div class="t" style="top:761.00px;font-size:12px;right:1239.30px;transform-origin:100% 50%;transform:scaleX(1.0080);">65</div>
<div class="t" style="top:761.00px;font-size:12px;left:610.80px;transform-origin:50% 50%;transform:translateX(-50%) scaleX(1.0000);">-</div>
<div class="t" style="top:761.00px;font-size:12px;right:1041.30px;transform-origin:100% 50%;transform:scaleX(1.0080);">248</div>
<div class="t" style="top:761.00px;font-size:12px;right:942.30px;transform-origin:100% 50%;transform:scaleX(1.0080);">248</div>
<div class="t" style="top:761.00px;font-size:12px;right:843.30px;transform-origin:100% 50%;transform:scaleX(1.0080);">248</div>
<div class="t" style="top:761.00px;font-size:12px;right:744.30px;transform-origin:100% 50%;transform:scaleX(1.0080);">248</div>
<div class="t" style="top:761.00px;font-size:12px;right:645.30px;transform-origin:100% 50%;transform:scaleX(1.0080);">248</div>
<div class="t" style="top:761.00px;font-size:12px;right:546.30px;transform-origin:100% 50%;transform:scaleX(1.0080);">248</div>
<div class="t" style="top:761.00px;font-size:12px;right:447.30px;transform-origin:100% 50%;transform:scaleX(1.0080);">248</div>
<div class="t" style="top:761.00px;font-size:12px;right:348.30px;transform-origin:100% 50%;transform:scaleX(1.0080);">248</div>
<div class="t" style="top:761.00px;font-size:12px;right:249.30px;transform-origin:100% 50%;transform:scaleX(1.0080);">248</div>
<div class="t" style="top:761.00px;font-size:12px;right:150.30px;transform-origin:100% 50%;transform:scaleX(1.0080);">248</div>
<div class="t" style="top:761.00px;font-size:12px;right:51.30px;transform-origin:100% 50%;transform:scaleX(1.0080);">2,544</div>
<div class="t" style="top:779.00px;font-size:12px;left:7.20px;transform:scaleX(0.9481);">61212 - Meals</div>
<div class="t" style="top:780.00px;font-size:12px;left:298.10px;transform:scaleX(0.8689);">LY even</div>
<div class="t" style="top:780.00px;font-size:12px;right:1325.10px;transform-origin:100% 50%;transform:scaleX(1.0080);">1.03</div>
<div class="t" style="top:779.00px;font-size:12px;right:1140.30px;transform-origin:100% 50%;transform:scaleX(1.0080);">101</div>
<div class="t" style="top:779.00px;font-size:12px;right:1041.30px;transform-origin:100% 50%;transform:scaleX(1.0080);">340</div>
<div class="t" style="top:779.00px;font-size:12px;right:942.30px;transform-origin:100% 50%;transform:scaleX(1.0080);">340</div>
<div class="t" style="top:779.00px;font-size:12px;right:843.30px;transform-origin:100% 50%;transform:scaleX(1.0080);">340</div>
<div class="t" style="top:779.00px;font-size:12px;right:744.30px;transform-origin:100% 50%;transform:scaleX(1.0080);">340</div>
<div class="t" style="top:779.00px;font-size:12px;right:645.30px;transform-origin:100% 50%;transform:scaleX(1.0080);">340</div>
<div class="t" style="top:779.00px;font-size:12px;right:546.30px;transform-origin:100% 50%;transform:scaleX(1.0080);">340</div>
<div class="t" style="top:779.00px;font-size:12px;right:447.30px;transform-origin:100% 50%;transform:scaleX(1.0080);">340</div>
<div class="t" style="top:779.00px;font-size:12px;right:348.30px;transform-origin:100% 50%;transform:scaleX(1.0080);">340</div>
<div class="t" style="top:779.00px;font-size:12px;right:249.30px;transform-origin:100% 50%;transform:scaleX(1.0080);">340</div>
<div class="t" style="top:779.00px;font-size:12px;right:150.30px;transform-origin:100% 50%;transform:scaleX(1.0080);">340</div>
<div class="t" style="top:779.00px;font-size:12px;right:51.30px;transform-origin:100% 50%;transform:scaleX(1.0080);">3,503</div>
<div class="t" style="top:797.00px;font-size:12px;left:7.20px;transform:scaleX(0.9930);">61145 - Transit</div>
<div class="t" style="top:798.00px;font-size:12px;left:298.10px;transform:scaleX(0.8689);">LY even</div>
<div class="t" style="top:798.00px;font-size:12px;right:1325.10px;transform-origin:100% 50%;transform:scaleX(1.0080);">1.03</div>
<div class="t" style="top:797.00px;font-size:12px;right:1239.30px;transform-origin:100% 50%;transform:scaleX(1.0080);">488</div>
<div class="t" style="top:797.00px;font-size:12px;right:1140.30px;transform-origin:100% 50%;transform:scaleX(1.0080);">488</div>
<div class="t" style="top:797.00px;font-size:12px;right:1041.30px;transform-origin:100% 50%;transform:scaleX(1.0080);">482</div>
<div class="t" style="top:797.00px;font-size:12px;right:942.30px;transform-origin:100% 50%;transform:scaleX(1.0080);">482</div>
<div class="t" style="top:797.00px;font-size:12px;right:843.30px;transform-origin:100% 50%;transform:scaleX(1.0080);">482</div>
<div class="t" style="top:797.00px;font-size:12px;right:744.30px;transform-origin:100% 50%;transform:scaleX(1.0080);">482</div>
<div class="t" style="top:797.00px;font-size:12px;right:645.30px;transform-origin:100% 50%;transform:scaleX(1.0080);">482</div>
<div class="t" style="top:797.00px;font-size:12px;right:546.30px;transform-origin:100% 50%;transform:scaleX(1.0080);">482</div>
<div class="t" style="top:797.00px;font-size:12px;right:447.30px;transform-origin:100% 50%;transform:scaleX(1.0080);">482</div>
<div class="t" style="top:797.00px;font-size:12px;right:348.30px;transform-origin:100% 50%;transform:scaleX(1.0080);">482</div>
<div class="t" style="top:797.00px;font-size:12px;right:249.30px;transform-origin:100% 50%;transform:scaleX(1.0080);">482</div>
<div class="t" style="top:797.00px;font-size:12px;right:150.30px;transform-origin:100% 50%;transform:scaleX(1.0080);">482</div>
<div class="t" style="top:797.00px;font-size:12px;right:51.30px;transform-origin:100% 50%;transform:scaleX(1.0080);">5,797</div>
<div class="t" style="top:815.00px;font-size:12px;left:7.20px;transform:scaleX(0.9447);">61141 - Payroll Processing Fees</div>
<div class="t" style="top:816.00px;font-size:12px;left:298.10px;transform:scaleX(0.8689);">LY even</div>
<div class="t" style="top:816.00px;font-size:12px;right:1325.10px;transform-origin:100% 50%;transform:scaleX(1.0080);">1.03</div>
<div class="t" style="top:815.00px;font-size:12px;right:1239.30px;transform-origin:100% 50%;transform:scaleX(1.0080);">543</div>
<div class="t" style="top:815.00px;font-size:12px;right:1140.30px;transform-origin:100% 50%;transform:scaleX(1.0080);">543</div>
<div class="t" style="top:815.00px;font-size:12px;right:1041.30px;transform-origin:100% 50%;transform:scaleX(1.0080);">511</div>
<div class="t" style="top:815.00px;font-size:12px;right:942.30px;transform-origin:100% 50%;transform:scaleX(1.0080);">511</div>
<div class="t" style="top:815.00px;font-size:12px;right:843.30px;transform-origin:100% 50%;transform:scaleX(1.0080);">511</div>
<div class="t" style="top:815.00px;font-size:12px;right:744.30px;transform-origin:100% 50%;transform:scaleX(1.0080);">511</div>
<div class="t" style="top:815.00px;font-size:12px;right:645.30px;transform-origin:100% 50%;transform:scaleX(1.0080);">511</div>
<div class="t" style="top:815.00px;font-size:12px;right:546.30px;transform-origin:100% 50%;transform:scaleX(1.0080);">511</div>
<div class="t" style="top:815.00px;font-size:12px;right:447.30px;transform-origin:100% 50%;transform:scaleX(1.0080);">511</div>
<div class="t" style="top:815.00px;font-size:12px;right:348.30px;transform-origin:100% 50%;transform:scaleX(1.0080);">511</div>
<div class="t" style="top:815.00px;font-size:12px;right:249.30px;transform-origin:100% 50%;transform:scaleX(1.0080);">511</div>
<div class="t" style="top:815.00px;font-size:12px;right:150.30px;transform-origin:100% 50%;transform:scaleX(1.0080);">511</div>
<div class="t" style="top:815.00px;font-size:12px;right:51.30px;transform-origin:100% 50%;transform:scaleX(1.0080);">6,200</div>
<div class="t" style="top:833.00px;font-size:12px;left:7.20px;transform:scaleX(0.9663);">61135 - Training Tax</div>
<div class="t" style="top:834.00px;font-size:12px;left:298.10px;transform:scaleX(0.8689);">LY even</div>
<div class="t" style="top:834.00px;font-size:12px;right:1325.10px;transform-origin:100% 50%;transform:scaleX(1.0080);">1.03</div>
<div class="t" style="top:833.00px;font-size:12px;right:1239.30px;transform-origin:100% 50%;transform:scaleX(1.0080);">262</div>
<div class="t" style="top:833.00px;font-size:12px;right:1140.30px;transform-origin:100% 50%;transform:scaleX(1.0080);">270</div>
<div class="t" style="top:833.00px;font-size:12px;right:1041.30px;transform-origin:100% 50%;transform:scaleX(1.0080);">303</div>
<div class="t" style="top:833.00px;font-size:12px;right:942.30px;transform-origin:100% 50%;transform:scaleX(1.0080);">303</div>
<div class="t" style="top:833.00px;font-size:12px;right:843.30px;transform-origin:100% 50%;transform:scaleX(1.0080);">303</div>
<div class="t" style="top:833.00px;font-size:12px;right:744.30px;transform-origin:100% 50%;transform:scaleX(1.0080);">303</div>
<div class="t" style="top:833.00px;font-size:12px;right:645.30px;transform-origin:100% 50%;transform:scaleX(1.0080);">303</div>
<div class="t" style="top:833.00px;font-size:12px;right:546.30px;transform-origin:100% 50%;transform:scaleX(1.0080);">303</div>
<div class="t" style="top:833.00px;font-size:12px;right:447.30px;transform-origin:100% 50%;transform:scaleX(1.0080);">303</div>
<div class="t" style="top:833.00px;font-size:12px;right:348.30px;transform-origin:100% 50%;transform:scaleX(1.0080);">303</div>
<div class="t" style="top:833.00px;font-size:12px;right:249.30px;transform-origin:100% 50%;transform:scaleX(1.0080);">303</div>
<div class="t" style="top:833.00px;font-size:12px;right:150.30px;transform-origin:100% 50%;transform:scaleX(1.0080);">303</div>
<div class="t" style="top:833.00px;font-size:12px;right:51.30px;transform-origin:100% 50%;transform:scaleX(1.0080);">3,566</div>
<div class="t" style="top:851.00px;font-size:12px;left:7.20px;transform:scaleX(0.9457);">61134 - Tax Edu Learning French</div>
<div class="t" style="top:852.00px;font-size:12px;left:298.10px;transform:scaleX(0.8689);">LY even</div>
<div class="t" style="top:852.00px;font-size:12px;right:1325.10px;transform-origin:100% 50%;transform:scaleX(1.0080);">1.03</div>
<div class="t" style="top:851.00px;font-size:12px;right:1239.30px;transform-origin:100% 50%;transform:scaleX(1.0080);">324</div>
<div class="t" style="top:851.00px;font-size:12px;right:1140.30px;transform-origin:100% 50%;transform:scaleX(1.0080);">334</div>
<div class="t" style="top:851.00px;font-size:12px;right:1041.30px;transform-origin:100% 50%;transform:scaleX(1.0080);">375</div>
<div class="t" style="top:851.00px;font-size:12px;right:942.30px;transform-origin:100% 50%;transform:scaleX(1.0080);">375</div>
<div class="t" style="top:851.00px;font-size:12px;right:843.30px;transform-origin:100% 50%;transform:scaleX(1.0080);">375</div>
<div class="t" style="top:851.00px;font-size:12px;right:744.30px;transform-origin:100% 50%;transform:scaleX(1.0080);">375</div>
<div class="t" style="top:851.00px;font-size:12px;right:645.30px;transform-origin:100% 50%;transform:scaleX(1.0080);">375</div>
<div class="t" style="top:851.00px;font-size:12px;right:546.30px;transform-origin:100% 50%;transform:scaleX(1.0080);">375</div>
<div class="t" style="top:851.00px;font-size:12px;right:447.30px;transform-origin:100% 50%;transform:scaleX(1.0080);">375</div>
<div class="t" style="top:851.00px;font-size:12px;right:348.30px;transform-origin:100% 50%;transform:scaleX(1.0080);">375</div>
<div class="t" style="top:851.00px;font-size:12px;right:249.30px;transform-origin:100% 50%;transform:scaleX(1.0080);">375</div>
<div class="t" style="top:851.00px;font-size:12px;right:150.30px;transform-origin:100% 50%;transform:scaleX(1.0080);">375</div>
<div class="t" style="top:851.00px;font-size:12px;right:51.30px;transform-origin:100% 50%;transform:scaleX(1.0080);">4,409</div>
<div class="t" style="top:869.00px;font-size:12px;left:7.20px;transform:scaleX(0.9778);">61132 - Life Insurance</div>
<div class="t" style="top:870.00px;font-size:12px;left:298.10px;transform:scaleX(0.8689);">LY even</div>
<div class="t" style="top:870.00px;font-size:12px;right:1325.10px;transform-origin:100% 50%;transform:scaleX(1.0080);">1.03</div>
<div class="t" style="top:869.00px;font-size:12px;right:1239.30px;transform-origin:100% 50%;transform:scaleX(1.0080);">940</div>
<div class="t" style="top:869.00px;font-size:12px;right:1140.30px;transform-origin:100% 50%;transform:scaleX(1.0080);">960</div>
<div class="t" style="top:869.00px;font-size:12px;right:1041.30px;transform-origin:100% 50%;transform:scaleX(1.0080);">1,133</div>
<div class="t" style="top:869.00px;font-size:12px;right:942.30px;transform-origin:100% 50%;transform:scaleX(1.0080);">1,133</div>
<div class="t" style="top:869.00px;font-size:12px;right:843.30px;transform-origin:100% 50%;transform:scaleX(1.0080);">1,133</div>
<div class="t" style="top:869.00px;font-size:12px;right:744.30px;transform-origin:100% 50%;transform:scaleX(1.0080);">1,133</div>
<div class="t" style="top:869.00px;font-size:12px;right:645.30px;transform-origin:100% 50%;transform:scaleX(1.0080);">1,133</div>
<div class="t" style="top:869.00px;font-size:12px;right:546.30px;transform-origin:100% 50%;transform:scaleX(1.0080);">1,133</div>
<div class="t" style="top:869.00px;font-size:12px;right:447.30px;transform-origin:100% 50%;transform:scaleX(1.0080);">1,133</div>
<div class="t" style="top:869.00px;font-size:12px;right:348.30px;transform-origin:100% 50%;transform:scaleX(1.0080);">1,133</div>
<div class="t" style="top:869.00px;font-size:12px;right:249.30px;transform-origin:100% 50%;transform:scaleX(1.0080);">1,133</div>
<div class="t" style="top:869.00px;font-size:12px;right:150.30px;transform-origin:100% 50%;transform:scaleX(1.0080);">1,133</div>
<div class="t" style="top:869.00px;font-size:12px;right:51.30px;transform-origin:100% 50%;transform:scaleX(1.0080);">13,230</div>
<div class="t" style="top:239.00px;font-size:11.6px;color:#c4c4c4;left:7.30px;transform:scaleX(0.9865);">OLAPivotTable</div>
<svg class="a" style="left:7px;top:170.1px;" width="27" height="35.2" viewBox="0 0 27 35.2"><path d="M11.3 0.4 L0 11.8 L6 11.8 C6.6 22 13 31 26.6 34.9 C19.5 30 16 22 15.8 11.8 L22.3 11.8 Z" fill="#1F4470"/></svg>
<svg class="a" style="left:58.8px;top:162.7px;" width="42.2" height="42.2" viewBox="0 0 42.2 42.2"><path d="M0.3 2.6 L0.3 42 L39.6 42 Z" fill="#D9D8D6"/><path d="M2.2 0.2 L19.9 0.2 L19.9 17.7 Z" fill="#FF9F1C"/><rect x="22.3" y="0.3" width="19.7" height="19.5" fill="#00416B"/><path d="M24.3 22.5 L42 22.5 L42 39.8 Z" fill="#FF9F1C"/></svg>
<div class="t" style="top:168.00px;font-size:31.2px;color:#1F4068;left:123.60px;transform:scaleX(0.8551);">PROFIT AND LOSS</div>
<div class="t" style="top:190.00px;font-size:15.2px;color:#1F4068;left:123.80px;transform:scaleX(0.9466);">Forecast for Sophia Loren France in the category of 11014 Eiffel ending 2025</div>
<svg class="a" style="left:900px;top:196.6px;" width="14.2" height="11" viewBox="0 0 14.2 11"><path d="M0 0.4 H14.1 L8.9 4.7 V9.1 L6 10.4 V4.7 Z" fill="#1F4068"/></svg>
<div class="t" style="top:193.00px;font-size:9.6px;font-weight:700;color:#1F4068;left:915.60px;transform:scaleX(0.9390);">Filters (Show)</div>
<div class="a" style="left:1127px;top:201.8px;width:102px;height:20.8px;background:transparent;box-sizing:border-box;border:2px solid #1a7a45;"></div>
<div class="a" style="left:1224.2px;top:218.2px;width:6px;height:6px;background:#fff;"></div>
<div class="a" style="left:1225.2px;top:219.2px;width:4.8px;height:4.8px;background:#1a7a45;"></div>
<svg class="a" style="left:1539px;top:195.6px;" width="21" height="18" viewBox="0 0 21 18"><path d="M0 8.3 Q9.85 -1.9 19.7 8.3 Q9.85 17.9 0 8.3 Z" fill="none" stroke="#1F4068" stroke-width="1.5" stroke-linejoin="miter"/><circle cx="9.85" cy="8.2" r="2.9" fill="none" stroke="#1F4068" stroke-width="1.25"/><path d="M0.9 16.8 L19.6 0.9" stroke="#1F4068" stroke-width="1.6"/></svg>
<div class="t" style="top:195.00px;font-size:9.6px;font-weight:700;color:#1F4068;left:1564.20px;transform:scaleX(0.9118);">Show Empty Rows</div>
</div>
<div class="a" style="left:1742.7px;top:150.3px;width:21.6px;height:729px;background:#F8F8F8;border-radius:10.8px;"></div>
<svg class="a" style="left:1747px;top:155.5px;" width="13" height="10" viewBox="0 0 13 10"><path d="M6.5 1.4 L11.6 8.6 L1.4 8.6 Z" fill="#707070" stroke="#707070" stroke-width="1.4" stroke-linejoin="round"/></svg>
<div class="a" style="left:1748.1px;top:170.9px;width:11.1px;height:49.3px;background:#707070;border-radius:5.6px;"></div>
<svg class="a" style="left:1747.2px;top:865.6px;" width="13" height="10" viewBox="0 0 13 10"><path d="M1.4 1.4 L11.6 1.4 L6.5 8.6 Z" fill="#707070" stroke="#707070" stroke-width="1.4" stroke-linejoin="round"/></svg>
<div class="a" style="left:5.2px;top:879.3px;width:1760.5px;height:40px;background:#F0F0F0;"></div>
<div class="a" style="left:146px;top:879.3px;width:138.4px;height:34.6px;background:#fff;border-radius:0 0 6px 6px;"></div>
<div class="a" style="left:139.5px;top:879.3px;width:6.5px;height:6.5px;background:#fff;background:radial-gradient(circle at 0 100%,#F0F0F0 6.2px,#fff 6.8px);"></div>
<div class="a" style="left:284.4px;top:879.3px;width:6.5px;height:6.5px;background:#fff;background:radial-gradient(circle at 100% 100%,#F0F0F0 6.2px,#fff 6.8px);"></div>
<svg class="a" style="left:36px;top:891px;" width="10" height="14" viewBox="0 0 10 14"><path d="M8.4 1.2 L1.6 7 L8.4 12.8" fill="none" stroke="#8c8c8c" stroke-width="1.3" stroke-linecap="round" stroke-linejoin="round"/></svg>
<svg class="a" style="left:76.5px;top:891px;" width="10" height="14" viewBox="0 0 10 14"><path d="M1.6 1.2 L8.4 7 L1.6 12.8" fill="none" stroke="#8c8c8c" stroke-width="1.3" stroke-linecap="round" stroke-linejoin="round"/></svg>
<div class="t" style="top:887.00px;font-size:16.9px;color:#1f1f1f;left:156.20px;transform:scaleX(1.0485);-webkit-text-stroke:0.45px #1f1f1f;">Profit and Loss</div>
<div class="a" style="left:156.5px;top:908.9px;width:117.2px;height:2.2px;background:#107C41;"></div>
<div class="a" style="left:289.2px;top:887px;width:1px;height:23.7px;background:#d0d0d0;"></div>
<div class="t" style="top:890.00px;font-size:17.6px;color:#2b2b2b;left:307.70px;transform:scaleX(0.9595);">Line Detail</div>
<div class="a" style="left:404.2px;top:887px;width:1px;height:23.7px;background:#d0d0d0;"></div>
<svg class="a" style="left:456.5px;top:890.5px;" width="16" height="16" viewBox="0 0 16 16"><path d="M7.8 1 V14.6 M1 7.8 H14.6" stroke="#3a3a3a" stroke-width="1.35"/></svg>
<div class="a" style="left:1064.4px;top:892.7px;width:2.8px;height:2.8px;background:#333;"></div>
<div class="a" style="left:1064.4px;top:897.8px;width:2.8px;height:2.8px;background:#333;"></div>
<div class="a" style="left:1064.4px;top:902.9px;width:2.8px;height:2.8px;background:#333;"></div>
<div class="a" style="left:1085.8px;top:887.8px;width:655.2px;height:21.6px;background:#F8F8F8;border-radius:10.8px;"></div>
<svg class="a" style="left:1091.6px;top:892px;" width="10" height="13" viewBox="0 0 10 13"><path d="M8.6 1.4 L8.6 11.6 L1.4 6.5 Z" fill="#707070" stroke="#707070" stroke-width="1.4" stroke-linejoin="round"/></svg>
<div class="a" style="left:1107px;top:893.2px;width:429.9px;height:10.9px;background:#707070;border-radius:5.5px;"></div>
<svg class="a" style="left:1725.5px;top:892.3px;" width="10" height="13" viewBox="0 0 10 13"><path d="M1.4 1.4 L1.4 11.6 L8.6 6.5 Z" fill="#707070" stroke="#707070" stroke-width="1.4" stroke-linejoin="round"/></svg>
<div class="a" style="left:5.2px;top:919.2px;width:1760.5px;height:26.6px;background:#F5F5F5;"></div>
<div class="a" style="left:5.2px;top:944.9px;width:1760.5px;height:0.9px;background:#fff;"></div>
<div class="a" style="left:5.2px;top:919px;width:1760.5px;height:1.1px;background:#c8c6c4;"></div>
<div class="t" style="top:924.00px;font-size:12.9px;color:#2b2b2b;left:19.50px;transform:scaleX(0.9440);">Ready</div>
<div class="t" style="top:924.00px;font-size:12.9px;color:#2b2b2b;left:76.70px;transform:scaleX(0.9409);">Calculate</div>
<svg class="a" style="left:145px;top:918px;" width="40" height="30" viewBox="0 0 40 30"><circle cx="16.7" cy="9" r="1.95" fill="none" stroke="#2b2b2b" stroke-width="1.1"/><path d="M13.9 10.5 L10.9 9.4 C9.2 9 8.6 10.9 10.2 11.6 L12.6 12.5 C13.4 12.9 13.6 13.5 13.5 14.6 C13.4 17 12.6 19.5 11.7 21.8 C11.3 23.3 13.6 24 14.4 22.4 C15.2 20.8 15.8 18.6 16.5 17.4 C17.2 18.2 17.6 19.2 17.9 20.3 M13.9 10.5 Q16.7 12.1 19.5 10.5 L22.5 9.4 C24.2 9 24.8 10.9 23.2 11.6 L19.8 13.4" fill="none" stroke="#2b2b2b" stroke-width="1.1" stroke-linecap="round" stroke-linejoin="round"/><path d="M18.2 15.2 L26.9 23.7 M26.9 15.2 L18.2 23.7" stroke="#2b2b2b" stroke-width="1.05" stroke-linecap="round"/></svg>
<div class="t" style="top:924.00px;font-size:12.9px;color:#2b2b2b;left:176.60px;transform:scaleX(0.9792);">Accessibility: Investigate</div>
<div class="a" style="left:1386.1px;top:919.9px;width:49.7px;height:26.2px;background:#E0E0E0;"></div>
<svg class="a" style="left:1401.7px;top:924.3px;" width="17.2" height="16.6" viewBox="0 0 17.2 16.6"><rect x="0.9" y="0.9" width="15.4" height="14.8" fill="none" stroke="#3a3a3a" stroke-width="1.3"/><path d="M6 0.9 V15.7 M11.2 0.9 V15.7 M0.9 5.8 H16.3 M0.9 10.8 H16.3" stroke="#3a3a3a" stroke-width="1.3"/></svg>
<svg class="a" style="left:1452.2px;top:924.4px;" width="17.6" height="16.6" viewBox="0 0 17.6 16.6"><rect x="0.8" y="0.8" width="16" height="15" rx="1" fill="none" stroke="#3a3a3a" stroke-width="1.3"/><rect x="4.6" y="4" width="8.4" height="8.6" fill="none" stroke="#3a3a3a" stroke-width="1.2"/><path d="M6.4 6.9 H11.2 M6.4 9.6 H11.2" stroke="#3a3a3a" stroke-width="1.1"/></svg>
<svg class="a" style="left:1501.8px;top:924.4px;" width="17.6" height="16.6" viewBox="0 0 17.6 16.6"><path d="M0.8 0.8 V15.6 H16.8 V0.8 Z M6.2 0.8 V7 M11.6 0.8 V7 M0.8 7.6 H16.8" fill="none" stroke="#3a3a3a" stroke-width="1.3"/></svg>
<div class="a" style="left:1543.2px;top:932.6px;width:9.2px;height:1.2px;background:#3a3a3a;"></div>
<div class="a" style="left:1559.1px;top:932.8px;width:124.9px;height:1px;background:#6a6a6a;"></div>
<div class="a" style="left:1599px;top:925.9px;width:5.9px;height:13.7px;background:#5a5a5a;"></div>
<div class="a" style="left:1620.8px;top:929.8px;width:1px;height:7px;background:#6a6a6a;"></div>
<div class="a" style="left:1689.9px;top:932.6px;width:9.4px;height:1.2px;background:#3a3a3a;"></div>
<div class="a" style="left:1694px;top:928.4px;width:1.2px;height:9.6px;background:#3a3a3a;"></div>
<div class="t" style="top:924.00px;font-size:12.6px;color:#2b2b2b;left:1716.80px;transform:scaleX(0.9120);">70%</div>
</body></html>
